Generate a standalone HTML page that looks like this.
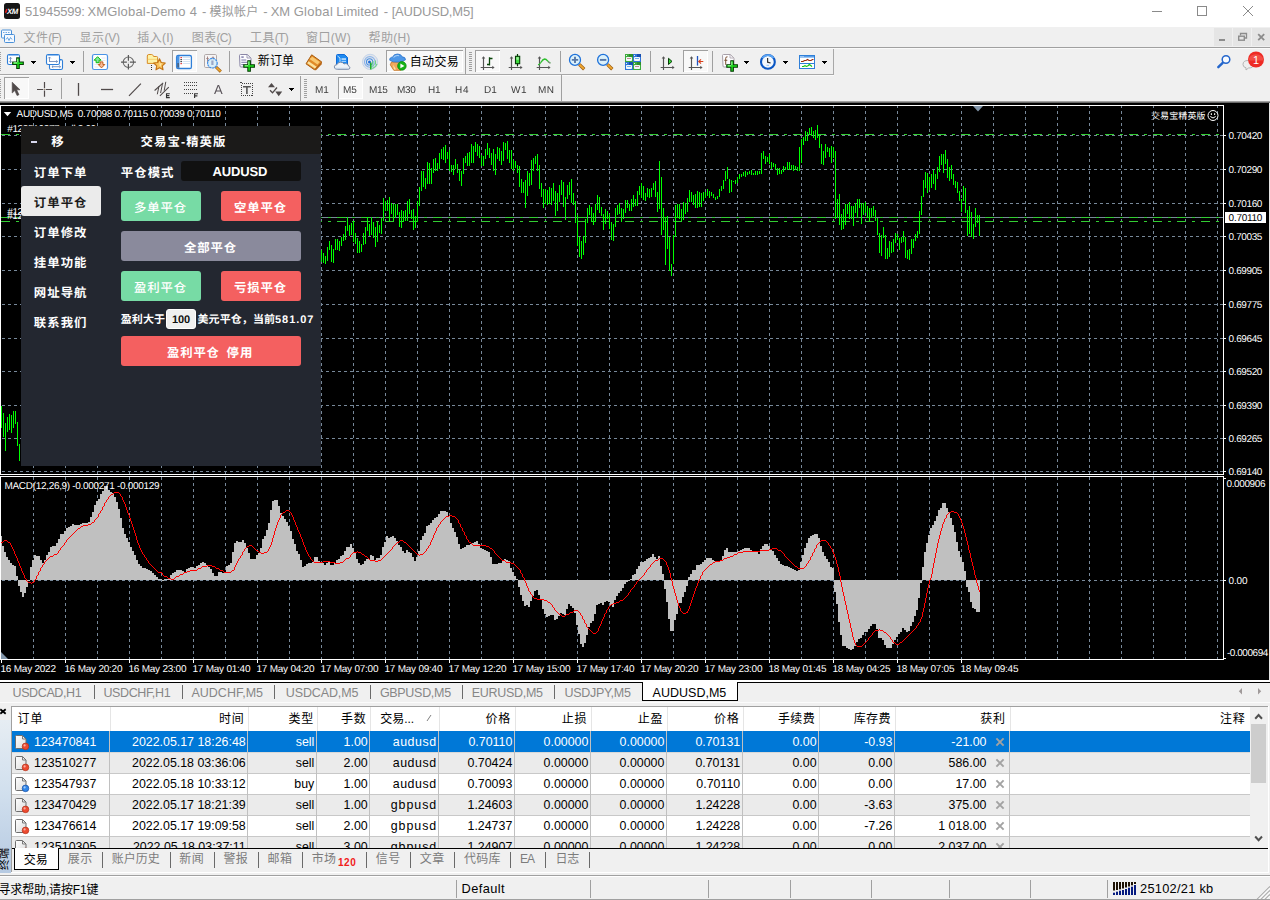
<!DOCTYPE html>
<html lang="zh-CN">
<head>
<meta charset="utf-8">
<title>51945599: XMGlobal-Demo 4 - 模拟帐户 - XM Global Limited - [AUDUSD,M5]</title>
<style>
html,body{margin:0;padding:0}
body{width:1270px;height:900px;overflow:hidden;position:relative;background:#f0f0f0;
font-family:"Liberation Sans","Noto Sans CJK SC",sans-serif;font-size:12px;color:#000;
-webkit-font-smoothing:antialiased}
.abs,.abs>*{position:absolute}
div,span{box-sizing:border-box;white-space:pre}

#title{left:0;top:0;width:1270px;height:27px;background:#fff}
#title .t{left:25px;top:3px;font-size:13.2px;line-height:17px;color:#999;letter-spacing:0.02px}
#menu{left:0;top:27px;width:1270px;height:20px;background:#f0f0f0}
#menu span{top:0;font-size:12px;line-height:20px;color:#a0a0a0}
#tbs{left:0;top:47px;width:1270px;height:55px;background:#f0f0f0}
.tbt{font-size:12px;line-height:14px;color:#000}
.tf{font-size:9.6px;line-height:12px;color:#333;text-align:center}


#chart{left:0;top:102px;width:1270px;height:578px;background:#000;overflow:hidden}
#chart span{color:#fff;line-height:12px;text-rendering:geometricPrecision}
#panel{left:21px;top:24px;width:300px;height:340px;background:#232730;overflow:hidden;font-family:"Liberation Sans","Noto Sans CJK SC",sans-serif}
#panel .hd{left:0;top:0;width:300px;height:28px;background:#1b1a19}
#panel span{color:#fff;font-weight:bold;line-height:20px}
#panel .btn{height:30px;border-radius:3px;text-align:center}
#panel .btn span{position:static;line-height:30px;font-size:13px}


#ctabs{left:0;top:680px;width:1270px;height:26px;background:#f0f0f0}
#ctabs span{line-height:16px}
#term{left:0;top:706px;width:1270px;height:171px;background:#f0f0f0;overflow:hidden}
#term span{line-height:16px}
#status{left:0;top:877px;width:1270px;height:23px;background:#f0f0f0}
#status span{line-height:16px}

</style>
</head>
<body>
<div id="title" class="abs"><svg width="1270" height="27" style="left:0;top:0"><rect x="4" y="3" width="16" height="16" rx="2.500" fill="#161616"/><path d="M5.600 12.800l1.300-3.900" stroke="#f0201a" stroke-width="1.500"/><text x="12.300" y="13.600" font-family="Liberation Sans, sans-serif" font-size="7.800" font-weight="bold" font-style="italic" fill="#fff" text-anchor="middle" letter-spacing="-.5" style="text-rendering:geometricPrecision">XM</text><path d="M1152 11.500h10" stroke="#8a8a8a" stroke-width="1"/><rect x="1197.500" y="6.500" width="9" height="9" fill="none" stroke="#8a8a8a" stroke-width="1"/><path d="M1243 6l10 10M1253 6l-10 10" stroke="#8a8a8a" stroke-width="1"/></svg><span style="left:25.00px;top:3px;font-size:13px;letter-spacing:-0.194px;line-height:17px;color:#999;">51945599:</span><span style="left:87.40px;top:3px;font-size:13px;letter-spacing:0.176px;line-height:17px;color:#999;">XMGlobal-Demo</span><span style="left:189.83px;top:3px;font-size:13px;letter-spacing:0.000px;line-height:17px;color:#999;">4</span><span style="left:201.88px;top:3px;font-size:13px;letter-spacing:0.000px;line-height:17px;color:#999;">-</span><span style="left:209.60px;top:3.5px;font-size:12px;letter-spacing:0.228px;line-height:17px;color:#999;">模拟帐户</span><span style="left:263.18px;top:3px;font-size:13px;letter-spacing:0.000px;line-height:17px;color:#999;">-</span><span style="left:270.70px;top:3px;font-size:13px;letter-spacing:-0.100px;line-height:17px;color:#999;">XM</span><span style="left:293.70px;top:3px;font-size:13px;letter-spacing:0.304px;line-height:17px;color:#999;">Global</span><span style="left:336.20px;top:3px;font-size:13px;letter-spacing:0.080px;line-height:17px;color:#999;">Limited</span><span style="left:383.68px;top:3px;font-size:13px;letter-spacing:0.000px;line-height:17px;color:#999;">-</span><span style="left:391.70px;top:3px;font-size:13px;letter-spacing:-0.190px;line-height:17px;color:#999;">[AUDUSD,M5]</span></div>
<div id="menu" class="abs"><svg width="1270" height="20" style="left:0;top:0"><rect x="1.500" y="3" width="10" height="8" rx="1" fill="#f4f9ff" stroke="#4a90d8"/><rect x="4.500" y="7.500" width="10" height="8" rx="1" fill="#f4f9ff" stroke="#4a90d8"/><path d="M6 12.500l1.500-2l1.500 3l1.500-3l1.500 2" stroke="#4a90d8" stroke-width=".8" fill="none"/><path d="M3 5.500h7" stroke="#4a90d8" stroke-width=".8" stroke-dasharray="1.500 1"/><rect x="1214" y="1" width="18" height="18" fill="#e5e5e5"/><rect x="1233" y="1" width="18" height="18" fill="#e5e5e5"/><rect x="1252" y="1" width="18" height="18" fill="#e5e5e5"/><rect x="1219" y="12" width="6" height="2" fill="#8c8c8c"/><path d="M1240.500 8.500v-2h6v4.500h-2" fill="none" stroke="#8c8c8c" stroke-width="1.300"/><rect x="1238.700" y="9.200" width="5.600" height="4" fill="#e5e5e5" stroke="#8c8c8c" stroke-width="1.400"/><path d="M1258.200 7.200l6 6M1264.200 7.200l-6 6" stroke="#8c8c8c" stroke-width="1.800"/></svg><span style="left:23.50px;top:3px;font-size:12px;letter-spacing:0.484px;line-height:16px;color:#a0a0a0;">文件</span><span style="left:48.30px;top:3px;font-size:12px;letter-spacing:-0.914px;line-height:16px;color:#a0a0a0;">(F)</span><span style="left:79.60px;top:3px;font-size:12px;letter-spacing:0.484px;line-height:16px;color:#a0a0a0;">显示</span><span style="left:104.40px;top:3px;font-size:12px;letter-spacing:-0.250px;line-height:16px;color:#a0a0a0;">(V)</span><span style="left:137.30px;top:3px;font-size:12px;letter-spacing:0.484px;line-height:16px;color:#a0a0a0;">插入</span><span style="left:162.10px;top:3px;font-size:12px;letter-spacing:0.086px;line-height:16px;color:#a0a0a0;">(I)</span><span style="left:191.80px;top:3px;font-size:12px;letter-spacing:0.484px;line-height:16px;color:#a0a0a0;">图表</span><span style="left:216.60px;top:3px;font-size:12px;letter-spacing:-0.786px;line-height:16px;color:#a0a0a0;">(C)</span><span style="left:250.00px;top:3px;font-size:12px;letter-spacing:0.484px;line-height:16px;color:#a0a0a0;">工具</span><span style="left:274.80px;top:3px;font-size:12px;letter-spacing:-0.714px;line-height:16px;color:#a0a0a0;">(T)</span><span style="left:306.00px;top:3px;font-size:12px;letter-spacing:0.484px;line-height:16px;color:#a0a0a0;">窗口</span><span style="left:330.80px;top:3px;font-size:12px;letter-spacing:0.286px;line-height:16px;color:#a0a0a0;">(W)</span><span style="left:368.50px;top:3px;font-size:12px;letter-spacing:0.484px;line-height:16px;color:#a0a0a0;">帮助</span><span style="left:393.30px;top:3px;font-size:12px;letter-spacing:0.114px;line-height:16px;color:#a0a0a0;">(H)</span></div>
<div id="tbs" class="abs"><svg width="1270" height="55" viewBox="0 47 1270 55" style="left:0;top:0"><rect x="0" y="47" width="1270" height="1" fill="#a0a0a0"/><rect x="0" y="48" width="1270" height="1" fill="#fafafa"/><rect x="0" y="74" width="834" height="1" fill="#a8a8a8"/><rect x="0" y="75" width="834" height="1" fill="#fafafa"/><rect x="833" y="49" width="1" height="26" fill="#a8a8a8"/><rect x="0" y="101" width="1270" height="1" fill="#a0a0a0"/><rect x="-2" y="52" width="3" height="1" fill="#a0a0a0" shape-rendering="crispEdges"/><rect x="-2" y="54" width="3" height="1" fill="#a0a0a0" shape-rendering="crispEdges"/><rect x="-2" y="56" width="3" height="1" fill="#a0a0a0" shape-rendering="crispEdges"/><rect x="-2" y="58" width="3" height="1" fill="#a0a0a0" shape-rendering="crispEdges"/><rect x="-2" y="60" width="3" height="1" fill="#a0a0a0" shape-rendering="crispEdges"/><rect x="-2" y="62" width="3" height="1" fill="#a0a0a0" shape-rendering="crispEdges"/><rect x="-2" y="64" width="3" height="1" fill="#a0a0a0" shape-rendering="crispEdges"/><rect x="-2" y="66" width="3" height="1" fill="#a0a0a0" shape-rendering="crispEdges"/><rect x="-2" y="68" width="3" height="1" fill="#a0a0a0" shape-rendering="crispEdges"/><rect x="-2" y="70" width="3" height="1" fill="#a0a0a0" shape-rendering="crispEdges"/><rect x="7.5" y="54.5" width="12" height="10" rx="1.6" fill="#fdfeff" stroke="#2f7fd8" stroke-width="1.1"/><path d="M8.3 55.5h10.4" stroke="#8fbdf0" stroke-width="1"/><path d="M10.500 57.300v5.400M9.200 58.700l1.300-1.400l1.300 1.400M9.200 61.300l1.300 1.400l1.300-1.400" stroke="#6f8cbc" stroke-width=".9" fill="none"/><path d="M16.75 57.900000000000006h2.5v4.05h4.05v2.5h-4.05v4.05h-2.5v-4.05h-4.05v-2.5h4.05z" fill="#1ee61e" stroke="#063c06" stroke-width="1.1" stroke-linejoin="miter"/><path d="M13.6 62.900000000000006h3.4499999999999997M17.7 58.800000000000004v3.4499999999999997" fill="none" stroke="#9af59a" stroke-width="1.1"/><path d="M31 61h5v1h-1v1h-1v1h-1v-1h-1v-1h-1z" fill="#000" shape-rendering="crispEdges"/><rect x="49.5" y="59.5" width="13" height="10" rx="1.6" fill="#fdfeff" stroke="#2f7fd8" stroke-width="1.1"/><path d="M50.3 60.5h11.4" stroke="#8fbdf0" stroke-width="1"/><path d="M52 66.700h8.500M53.200 65.500l-1.300 1.200l1.300 1.200M59.300 65.500l1.300 1.200l-1.300 1.200" stroke="#6f8cbc" stroke-width=".9" fill="none"/><rect x="46.5" y="54.5" width="13" height="10" rx="1.6" fill="#fdfeff" stroke="#2f7fd8" stroke-width="1.1"/><path d="M47.3 55.5h11.4" stroke="#8fbdf0" stroke-width="1"/><path d="M49.500 57v5M48.300 58.300l1.200-1.300l1.200 1.300M49.500 61.500h8M56.300 60.300l1.300 1.200l-1.300 1.200" stroke="#6f8cbc" stroke-width=".9" fill="none"/><path d="M70 61h5v1h-1v1h-1v1h-1v-1h-1v-1h-1z" fill="#000" shape-rendering="crispEdges"/><rect x="83" y="51" width="1" height="21" fill="#a0a0a0" shape-rendering="crispEdges"/><rect x="92.500" y="54.500" width="15" height="15" rx="1.800" fill="#fdfeff" stroke="#4a93e6" stroke-width="1.200"/><path d="M101.500 58h4M101.500 60.500h4M94.500 64.500h4M94.500 67h4" stroke="#dfe5ec" stroke-width=".8"/><path d="M97.600 56.700l3.500 3.500h-2v2.500h-3v-2.500h-2z" fill="#7fe89a" stroke="#10b810" stroke-width="1"/><path d="M101.500 67.900l-3.300-3.400h1.900v-2.600h2.800v2.600h1.900z" fill="#f7b896" stroke="#c0601c" stroke-width="1"/><circle cx="128.400" cy="62.200" r="5.200" fill="none" stroke="#6a6a6a" stroke-width="1.050"/><path d="M128.400 55v5.700M128.400 63.700v5.800M121 62.200h5.900M129.900 62.200h6" stroke="#5a5a5a" stroke-width="1.200"/><rect x="127.900" y="61.700" width="1" height="1" fill="#c8c8c8"/><path d="M147.300 56q0-1.500 1.500-1.500h2.800q1 0 1.500 1l.5 1h3q1 0 1 1v5.900h-10.300z" fill="#fdf3a8" stroke="#d88a24" stroke-width="1"/><path d="M147.800 59.300h9.300" stroke="#f5d070" stroke-width="1"/><path d="M151.500 65v5" stroke="#333" stroke-width="1" stroke-dasharray="1 1" shape-rendering="crispEdges"/><path d="M159.500 58.800l1.750 3.700l4 .5l-2.950 2.800l.75 4l-3.550-1.950l-3.550 1.950l.75-4l-2.950-2.800l4-.5z" fill="#f9c45c" stroke="#c47414" stroke-width="1.100" stroke-linejoin="round"/><path d="M159.500 61.500l.8 1.900l1.800.2l-1.300 1.300l.3 1.800l-1.600-.9" fill="#fde9a8"/><rect x="172" y="50" width="25" height="22" fill="#f8f8f8" shape-rendering="crispEdges"/><rect x="172" y="50" width="25" height="1" fill="#a0a0a0" shape-rendering="crispEdges"/><rect x="172" y="50" width="1" height="22" fill="#a0a0a0" shape-rendering="crispEdges"/><rect x="173" y="71" width="24" height="1" fill="#fff" shape-rendering="crispEdges"/><rect x="196" y="51" width="1" height="21" fill="#fff" shape-rendering="crispEdges"/><rect x="176.600" y="55.500" width="14.800" height="13" rx="1.600" fill="#fff" stroke="#2f7fd8" stroke-width="1.300"/><rect x="176.800" y="56" width="2.700" height="12" fill="#4c95e6"/><rect x="177.400" y="63" width="1.400" height="4.500" fill="#4a5a70"/><path d="M182.500 57.500h7.500M182.500 59.500h7.500M182.500 61.500h7.500M182.500 63.500h7.500" stroke="#cfe0f2" stroke-width=".9"/><rect x="180.500" y="57" width="1.300" height="1.200" fill="#e81c1c"/><rect x="180.500" y="59" width="1.300" height="1.200" fill="#222"/><rect x="180.500" y="61" width="1.300" height="1.200" fill="#222"/><rect x="180.500" y="63" width="1.300" height="1.200" fill="#e81c1c"/><rect x="204.500" y="54.500" width="12" height="13" rx="1.200" fill="#f6f4f4" stroke="#b0a8a8"/><path d="M207.500 56.500v6M206.300 58.500h2.400M213 56.500v5M211.800 57.800h2.400" stroke="#9a7a7a" stroke-width=".9"/><path d="M216 67l4.800 4.600" stroke="#9a5a10" stroke-width="3"/><path d="M216.300 67.300l4.300 4.100" stroke="#f0a830" stroke-width="1.600"/><circle cx="212.400" cy="63.200" r="4.800" fill="#d8eefa" fill-opacity=".9" stroke="#3f8ee6" stroke-width="1.200" stroke-dasharray="2.200 .6"/><path d="M211.300 60.500h2.200v4.500h-2.200z" fill="#9aa8c8"/><rect x="229" y="51" width="1" height="21" fill="#a0a0a0" shape-rendering="crispEdges"/><path d="M239.5 55.5q0-1 1-1h6.800000000000001l3.7 3.7v7.800000000000001q0 1-1 1h-9q-1 0-1-1z" fill="#fcfcfe" stroke="#8a86a6" stroke-width="1"/><path d="M247.0 54.8v3.2h3.2" fill="none" stroke="#8a86a6" stroke-width=".8"/><rect x="241.300" y="56.300" width="2.400" height="1.600" fill="#8a86b0"/><path d="M241.300 60h5M241.300 62.300h6M241.300 64.600h3" stroke="#7a78a8" stroke-width="1"/><path d="M247.85 60.7h2.5v4.05h4.05v2.5h-4.05v4.05h-2.5v-4.05h-4.05v-2.5h4.05z" fill="#1ee61e" stroke="#063c06" stroke-width="1.1" stroke-linejoin="miter"/><path d="M244.7 65.7h3.4499999999999997M248.79999999999998 61.6v3.4499999999999997" fill="none" stroke="#9af59a" stroke-width="1.1"/><path d="M311.700 54.800l10.100 7.200l-7.300 7.800l-8.500-6z" fill="#e08a28" stroke="#a85c10" stroke-width="1" stroke-linejoin="round"/><path d="M312.300 56.800l7.500 5.300l-2.300 2.500l-8-5.500z" fill="#f9c870"/><path d="M308.600 61.300l8 5.400l-1.600 1.700l-7.800-5.200z" fill="#fbe3a0"/><path d="M314.600 69.600l6.800-7.300l.6 1.600l-6.200 6.500z" fill="#b8681a"/><path d="M336.500 55.500q0-1 1-1h7l3 3v7h-11z" fill="#1e8af0" stroke="#0f6ad8" stroke-width="1"/><path d="M337.500 56l2.500 2v5.500" fill="none" stroke="#bfe0ff" stroke-width="1"/><rect x="341.500" y="58.300" width="4.500" height="1.500" fill="#cfe8ff"/><rect x="341.500" y="60.800" width="4.500" height="1.200" fill="#9fd0ff"/><path d="M337.300 69.300q-3 0-3-2.400q0-2.200 2.700-2.300q.8-2.400 3.600-2.400q2.400 0 3.400 1.800q1.200-.7 2.600-.2q1.900.6 2 2.400q1.300.4 1.300 1.600q0 1.500-2 1.500z" fill="#eef3f9" stroke="#7c8ca8" stroke-width="1"/><path d="M335.500 68.300h12.500" stroke="#c0cfe2" stroke-width="1"/><circle cx="370.100" cy="61.900" r="7.600" fill="#e4e6ea" stroke="#c4d4ea" stroke-width="1"/><circle cx="369.800" cy="61.900" r="5.300" fill="none" stroke="#8ab4ea" stroke-width="1.100"/><circle cx="369.600" cy="61.900" r="3.100" fill="none" stroke="#4a90e2" stroke-width="1.100"/><circle cx="369.500" cy="61.900" r="1.500" fill="#1f6ad8"/><path d="M370.800 69.600v-7" stroke="#19b019" stroke-width="1.500"/><path d="M373 66.500v-5.500M375.500 64.500v-4M371.500 68.500q3.500-.5 5.500-4.500" stroke="#6fd08a" stroke-width="1.100" fill="none"/><rect x="386" y="50" width="77" height="22" fill="#f8f8f8" shape-rendering="crispEdges"/><rect x="386" y="50" width="77" height="1" fill="#a0a0a0" shape-rendering="crispEdges"/><rect x="386" y="50" width="1" height="22" fill="#a0a0a0" shape-rendering="crispEdges"/><rect x="387" y="71" width="76" height="1" fill="#fff" shape-rendering="crispEdges"/><rect x="462" y="51" width="1" height="21" fill="#fff" shape-rendering="crispEdges"/><path d="M391.500 62h11.500l1.300 2.500l-3.500 5.800h-7l-3.500-5.500z" fill="#f3a85c" stroke="#c77a2c" stroke-width=".9"/><path d="M393 64.500l3 5h-2z" fill="#fde4a8"/><path d="M389.800 60.300q-.6-2.800 3-3.300q.8-3 4.700-3q3.700 0 4.600 2.800q3.500.2 3.400 3q-3 2.500-8 2.300q-5 .2-7.700-1.800z" fill="#4d97e8" stroke="#2c74cc" stroke-width=".8"/><path d="M393.500 57.500q2-2.500 5.500-1.800" fill="none" stroke="#a8d0f8" stroke-width="1.100"/><circle cx="401.900" cy="65.900" r="4.300" fill="#17b417" stroke="#0c8a0c" stroke-width=".7"/><path d="M400.400 63.500l4 2.400l-4 2.400z" fill="#fff"/><rect x="465" y="48" width="1" height="26" fill="#a0a0a0" shape-rendering="crispEdges"/><rect x="469" y="52" width="3" height="1" fill="#a0a0a0" shape-rendering="crispEdges"/><rect x="469" y="54" width="3" height="1" fill="#a0a0a0" shape-rendering="crispEdges"/><rect x="469" y="56" width="3" height="1" fill="#a0a0a0" shape-rendering="crispEdges"/><rect x="469" y="58" width="3" height="1" fill="#a0a0a0" shape-rendering="crispEdges"/><rect x="469" y="60" width="3" height="1" fill="#a0a0a0" shape-rendering="crispEdges"/><rect x="469" y="62" width="3" height="1" fill="#a0a0a0" shape-rendering="crispEdges"/><rect x="469" y="64" width="3" height="1" fill="#a0a0a0" shape-rendering="crispEdges"/><rect x="469" y="66" width="3" height="1" fill="#a0a0a0" shape-rendering="crispEdges"/><rect x="469" y="68" width="3" height="1" fill="#a0a0a0" shape-rendering="crispEdges"/><rect x="469" y="70" width="3" height="1" fill="#a0a0a0" shape-rendering="crispEdges"/><rect x="475" y="50" width="25" height="22" fill="#f8f8f8" shape-rendering="crispEdges"/><rect x="475" y="50" width="25" height="1" fill="#a0a0a0" shape-rendering="crispEdges"/><rect x="475" y="50" width="1" height="22" fill="#a0a0a0" shape-rendering="crispEdges"/><rect x="476" y="71" width="24" height="1" fill="#fff" shape-rendering="crispEdges"/><rect x="499" y="51" width="1" height="21" fill="#fff" shape-rendering="crispEdges"/><path d="M483.5 57.099999999999994V70M480.7 67.5H493.8" stroke="#555" stroke-width="1.15" fill="none"/><path d="M481.7 58.599999999999994L483.5 56.3L485.3 58.599999999999994zM492.3 65.7L494.6 67.5L492.3 69.3z" fill="#555"/><path d="M489.500 57.300v8.300M487 64.500h2.500M489.500 58.500h3" stroke="#0a460a" stroke-width="1.300" fill="none"/><path d="M511.5 57.099999999999994V70M508.7 67.5H521.8000000000001" stroke="#555" stroke-width="1.15" fill="none"/><path d="M509.7 58.599999999999994L511.5 56.3L513.3 58.599999999999994zM520.3000000000001 65.7L522.6 67.5L520.3000000000001 69.3z" fill="#555"/><path d="M517.500 54v12.300" stroke="#063c06" stroke-width="1.200"/><rect x="515.500" y="56.300" width="4.200" height="7.400" fill="#3fdc3f" stroke="#063c06" stroke-width="1.100"/><rect x="516.400" y="57.200" width="2.400" height="2.600" fill="#9af09a"/><path d="M539.5 57.099999999999994V70M536.7 67.5H549.8000000000001" stroke="#555" stroke-width="1.15" fill="none"/><path d="M537.7 58.599999999999994L539.5 56.3L541.3 58.599999999999994zM548.3000000000001 65.7L550.6 67.5L548.3000000000001 69.3z" fill="#555"/><path d="M538 64.800q1.500-.3 2.800-2.300q2-3.300 3.800-3.500q1.500 0 3 1.800q1.500 1.800 2.800 2.200" stroke="#2fc02f" stroke-width="1.300" fill="none"/><path d="M548 61.800l2.400 1.400" stroke="#8a8a8a" stroke-width="1.200"/><rect x="560" y="51" width="1" height="21" fill="#a0a0a0" shape-rendering="crispEdges"/><path d="M579.3 64.4l4.9 4.8" stroke="#9a5a10" stroke-width="3.3" stroke-linecap="butt"/><path d="M579.6 64.7l4.300 4.200" stroke="#f0a830" stroke-width="1.900" stroke-linecap="butt"/><circle cx="575" cy="59.9" r="5.5" fill="#dcf1fa" stroke="#1f72da" stroke-width="1.3"/><path d="M571.8 59.9h6.4M575 56.699999999999996v6.4" stroke="#5878a8" stroke-width="1.900"/><path d="M607.4 64.4l4.9 4.8" stroke="#9a5a10" stroke-width="3.3" stroke-linecap="butt"/><path d="M607.7 64.7l4.300 4.200" stroke="#f0a830" stroke-width="1.900" stroke-linecap="butt"/><circle cx="603.1" cy="59.9" r="5.5" fill="#dcf1fa" stroke="#1f72da" stroke-width="1.3"/><path d="M599.9 59.9h6.4" stroke="#5878a8" stroke-width="1.900"/><rect x="625" y="54" width="8" height="8" fill="#3daa3d" shape-rendering="crispEdges"/><rect x="629" y="54" width="4" height="3" fill="#2a8f2a" shape-rendering="crispEdges"/><rect x="626" y="55" width="1" height="1" fill="#e8f8e8"/><rect x="626" y="57" width="6" height="4" rx=".8" fill="#f4f8fb"/><rect x="627" y="58" width="4" height="1" fill="#c09090"/><rect x="633" y="54" width="8" height="8" fill="#2f74d6" shape-rendering="crispEdges"/><rect x="637" y="54" width="4" height="3" fill="#174fb0" shape-rendering="crispEdges"/><rect x="634" y="55" width="1" height="1" fill="#e8f8e8"/><rect x="634" y="57" width="6" height="4" rx=".8" fill="#f4f8fb"/><rect x="635" y="58" width="4" height="1" fill="#6fb0f0"/><rect x="625" y="62" width="8" height="8" fill="#2f74d6" shape-rendering="crispEdges"/><rect x="629" y="62" width="4" height="3" fill="#174fb0" shape-rendering="crispEdges"/><rect x="626" y="63" width="1" height="1" fill="#e8f8e8"/><rect x="626" y="65" width="6" height="4" rx=".8" fill="#f4f8fb"/><rect x="627" y="66" width="4" height="1" fill="#6fb0f0"/><rect x="633" y="62" width="8" height="8" fill="#3daa3d" shape-rendering="crispEdges"/><rect x="637" y="62" width="4" height="3" fill="#2a8f2a" shape-rendering="crispEdges"/><rect x="634" y="63" width="1" height="1" fill="#e8f8e8"/><rect x="634" y="65" width="6" height="4" rx=".8" fill="#f4f8fb"/><rect x="635" y="66" width="4" height="1" fill="#c09090"/><rect x="650" y="51" width="1" height="21" fill="#a0a0a0" shape-rendering="crispEdges"/><path d="M663.5 57.099999999999994V70M660.7 67.5H673.8000000000001" stroke="#555" stroke-width="1.15" fill="none"/><path d="M661.7 58.599999999999994L663.5 56.3L665.3 58.599999999999994zM672.3000000000001 65.7L674.6 67.5L672.3000000000001 69.3z" fill="#555"/><path d="M668.500 58.300l3.500 3.100l-3.500 3.100z" fill="#35d835" stroke="#063c06" stroke-width="1"/><rect x="683" y="50" width="25" height="22" fill="#f8f8f8" shape-rendering="crispEdges"/><rect x="683" y="50" width="25" height="1" fill="#a0a0a0" shape-rendering="crispEdges"/><rect x="683" y="50" width="1" height="22" fill="#a0a0a0" shape-rendering="crispEdges"/><rect x="684" y="71" width="24" height="1" fill="#fff" shape-rendering="crispEdges"/><rect x="707" y="51" width="1" height="21" fill="#fff" shape-rendering="crispEdges"/><path d="M691.5 57.099999999999994V70M688.7 67.5H701.8000000000001" stroke="#555" stroke-width="1.15" fill="none"/><path d="M689.7 58.599999999999994L691.5 56.3L693.3 58.599999999999994zM700.3000000000001 65.7L702.6 67.5L700.3000000000001 69.3z" fill="#555"/><path d="M697.500 56v9.600" stroke="#1f55c0" stroke-width="1.300"/><path d="M703.300 61.500h-4.500M701 59.300l-2.300 2.200l2.300 2.200" stroke="#d8401c" stroke-width="1.100" fill="none"/><rect x="712" y="51" width="1" height="21" fill="#a0a0a0" shape-rendering="crispEdges"/><path d="M722.5 55.5q0-1 1-1h6.800000000000001l3.7 3.7v7.800000000000001q0 1-1 1h-9q-1 0-1-1z" fill="#fcfcfe" stroke="#a8a0a8" stroke-width="1"/><path d="M730.0 54.8v3.2h3.2" fill="none" stroke="#a8a0a8" stroke-width=".8"/><path d="M727.500 56.800q-1.800-.2-1.800 1.500v6.500M724.300 60.300h3" stroke="#7a5030" stroke-width="1" fill="none"/><path d="M730.85 60.7h2.5v4.05h4.05v2.5h-4.05v4.05h-2.5v-4.05h-4.05v-2.5h4.05z" fill="#1ee61e" stroke="#063c06" stroke-width="1.1" stroke-linejoin="miter"/><path d="M727.7 65.7h3.4499999999999997M731.8000000000001 61.6v3.4499999999999997" fill="none" stroke="#9af59a" stroke-width="1.1"/><path d="M744 61h5v1h-1v1h-1v1h-1v-1h-1v-1h-1z" fill="#000" shape-rendering="crispEdges"/><circle cx="767.900" cy="61.900" r="6.900" fill="#f4f8fc" stroke="#0a56c4" stroke-width="2.100"/><path d="M762.300 58a6.900 6.900 0 0 1 11.200 0" fill="none" stroke="#5aa4f4" stroke-width="1.600"/><path d="M767.600 58v4.200l3 .8" stroke="#333" stroke-width="1.200" fill="none"/><path d="M766.500 65.300h2.500" stroke="#8ac0f8" stroke-width="1"/><path d="M783 61h5v1h-1v1h-1v1h-1v-1h-1v-1h-1z" fill="#000" shape-rendering="crispEdges"/><rect x="799" y="55" width="16" height="14" fill="#2f7fd8" shape-rendering="crispEdges"/><rect x="800" y="56" width="14" height="2" fill="#9cc6f4" shape-rendering="crispEdges"/><rect x="804" y="56" width="10" height="1" fill="#5a9ee8" shape-rendering="crispEdges"/><rect x="800" y="58" width="14" height="5" fill="#fff" shape-rendering="crispEdges"/><rect x="800" y="64" width="14" height="4" fill="#fff" shape-rendering="crispEdges"/><path d="M801 61.500h2l1.500-1h1.500l1.500-1l1.500 1h2l1.500-1h1" stroke="#9a2a0a" stroke-width="1.100" fill="none"/><path d="M802 66.500h1.500l1.500-.800l1.500.800l1.500-.800l1.300-1.200l1.500 1l1.200 1.200" stroke="#12c412" stroke-width="1.100" fill="none"/><path d="M822 61h5v1h-1v1h-1v1h-1v-1h-1v-1h-1z" fill="#000" shape-rendering="crispEdges"/><path d="M1218.300 67.200l4.400-4.400" stroke="#2466cc" stroke-width="2.400" stroke-linecap="round"/><circle cx="1226" cy="59.500" r="3.800" fill="#f8fbff" stroke="#2466cc" stroke-width="1.500"/><path d="M1243 64.500q0-4 5-4q5.500 0 5.500 4q0 3.500-5 3.500l-2.500 2v-2.200q-3-.6-3-3.300z" fill="#eeeeee" stroke="#b4b4b4" stroke-width="1"/><circle cx="1256" cy="59.500" r="8" fill="#ee2a24"/><path d="M1248.200 60.500a8 8 0 0 1 15.600 0z" fill="#f4564e" opacity=".8"/><rect x="-2" y="79" width="3" height="1" fill="#a0a0a0" shape-rendering="crispEdges"/><rect x="-2" y="81" width="3" height="1" fill="#a0a0a0" shape-rendering="crispEdges"/><rect x="-2" y="83" width="3" height="1" fill="#a0a0a0" shape-rendering="crispEdges"/><rect x="-2" y="85" width="3" height="1" fill="#a0a0a0" shape-rendering="crispEdges"/><rect x="-2" y="87" width="3" height="1" fill="#a0a0a0" shape-rendering="crispEdges"/><rect x="-2" y="89" width="3" height="1" fill="#a0a0a0" shape-rendering="crispEdges"/><rect x="-2" y="91" width="3" height="1" fill="#a0a0a0" shape-rendering="crispEdges"/><rect x="-2" y="93" width="3" height="1" fill="#a0a0a0" shape-rendering="crispEdges"/><rect x="-2" y="95" width="3" height="1" fill="#a0a0a0" shape-rendering="crispEdges"/><rect x="-2" y="97" width="3" height="1" fill="#a0a0a0" shape-rendering="crispEdges"/><rect x="4" y="77" width="25" height="22" fill="#f8f8f8" shape-rendering="crispEdges"/><rect x="4" y="77" width="25" height="1" fill="#a0a0a0" shape-rendering="crispEdges"/><rect x="4" y="77" width="1" height="22" fill="#a0a0a0" shape-rendering="crispEdges"/><rect x="5" y="98" width="24" height="1" fill="#fff" shape-rendering="crispEdges"/><rect x="28" y="78" width="1" height="21" fill="#fff" shape-rendering="crispEdges"/><path d="M12.200 82.200v10.800l2.600-2.400l2.300 5l1.900-.9l-2.300-4.900h3.300z" fill="#504a4a" stroke="#504a4a" stroke-width=".6" stroke-linejoin="round"/><path d="M44.500 82v6.300M44.500 90.500v6.300M37 89.500h6.300M45.700 89.500h6.300" stroke="#504a4a" stroke-width="1.200"/><rect x="44" y="89" width="1" height="1" fill="#a08870"/><rect x="61" y="78" width="1" height="21" fill="#a0a0a0" shape-rendering="crispEdges"/><path d="M78.500 83v12.800" stroke="#504a4a" stroke-width="1.300"/><path d="M101 89.500h12.100" stroke="#504a4a" stroke-width="1.300"/><path d="M129 95.800l11.900-12.200" stroke="#504a4a" stroke-width="1.200"/><path d="M154.600 90.500l8.600-7.600M159.900 95.800l8.900-8.600" stroke="#504a4a" stroke-width="1.100" fill="none"/><path d="M157.300 94.300l1.700-8.300M160.600 93l1.800-9M164.200 90.600l1.600-8.800" stroke="#504a4a" stroke-width="1" fill="none"/><path d="M169.800 93.700h-3.300v3.900h3.300M166.500 95.650h2.800" stroke="#333" stroke-width="1.100" fill="none"/><path d="M184 82.5h14" stroke="#444" stroke-width="1" stroke-dasharray="1 1" shape-rendering="crispEdges"/><path d="M184 85.5h14" stroke="#444" stroke-width="1" stroke-dasharray="1 1" shape-rendering="crispEdges"/><path d="M184 89.5h14" stroke="#444" stroke-width="1" stroke-dasharray="1 1" shape-rendering="crispEdges"/><path d="M184 93.500h10" stroke="#444" stroke-width="1" stroke-dasharray="1 1" shape-rendering="crispEdges"/><path d="M194.600 98.100v-4.400h3.400M194.600 95.900h2.800" stroke="#333" stroke-width="1.150" fill="none"/><rect x="241.500" y="83.500" width="11" height="12" fill="none" stroke="#444" stroke-width="1" stroke-dasharray="1 1" shape-rendering="crispEdges"/><rect x="240" y="82" width="2" height="1" fill="#444"/><path d="M243 86.700h7.800M246.900 86.700v7.300" stroke="#555" stroke-width="1.600" fill="none"/><path d="M268 87.200l3.500-4.300l3.500 4.300zM275.300 91.600l3.450 4.600l3.450-4.600z" fill="#504a4a"/><path d="M270 90.300l2.500 2.500l4.500-5.300" stroke="#504a4a" stroke-width="1.300" fill="none"/><path d="M289 88h5v1h-1v1h-1v1h-1v-1h-1v-1h-1z" fill="#000" shape-rendering="crispEdges"/><rect x="300" y="76" width="1" height="25" fill="#a0a0a0" shape-rendering="crispEdges"/><rect x="304" y="79" width="3" height="1" fill="#a0a0a0" shape-rendering="crispEdges"/><rect x="304" y="81" width="3" height="1" fill="#a0a0a0" shape-rendering="crispEdges"/><rect x="304" y="83" width="3" height="1" fill="#a0a0a0" shape-rendering="crispEdges"/><rect x="304" y="85" width="3" height="1" fill="#a0a0a0" shape-rendering="crispEdges"/><rect x="304" y="87" width="3" height="1" fill="#a0a0a0" shape-rendering="crispEdges"/><rect x="304" y="89" width="3" height="1" fill="#a0a0a0" shape-rendering="crispEdges"/><rect x="304" y="91" width="3" height="1" fill="#a0a0a0" shape-rendering="crispEdges"/><rect x="304" y="93" width="3" height="1" fill="#a0a0a0" shape-rendering="crispEdges"/><rect x="304" y="95" width="3" height="1" fill="#a0a0a0" shape-rendering="crispEdges"/><rect x="304" y="97" width="3" height="1" fill="#a0a0a0" shape-rendering="crispEdges"/><rect x="338" y="77" width="25" height="22" fill="#f8f8f8" shape-rendering="crispEdges"/><rect x="338" y="77" width="25" height="1" fill="#a0a0a0" shape-rendering="crispEdges"/><rect x="338" y="77" width="1" height="22" fill="#a0a0a0" shape-rendering="crispEdges"/><rect x="339" y="98" width="24" height="1" fill="#fff" shape-rendering="crispEdges"/><rect x="362" y="78" width="1" height="21" fill="#fff" shape-rendering="crispEdges"/><rect x="561" y="75" width="1" height="26" fill="#a0a0a0" shape-rendering="crispEdges"/></svg><span style="left:257.80px;top:7px;font-size:12px;letter-spacing:0.142px;line-height:14px;color:#000;">新订单</span><span style="left:409.80px;top:7.5px;font-size:12px;letter-spacing:0.328px;line-height:14px;color:#000;">自动交易</span><span style="left:214.30px;top:36.5px;font-size:13px;letter-spacing:0.000px;line-height:12px;color:#5a545a;text-rendering:geometricPrecision;will-change:transform;">A</span><span style="left:1252.500px;top:6.500px;font-size:11px;line-height:12px;color:#fff;width:7px;text-align:center">1</span><span style="left:315.10px;top:38px;font-size:10px;letter-spacing:-0.106px;line-height:12px;color:#3c3c3c;text-rendering:geometricPrecision;will-change:transform;">M1</span><span style="left:343.10px;top:38px;font-size:10px;letter-spacing:-0.106px;line-height:12px;color:#3c3c3c;text-rendering:geometricPrecision;will-change:transform;">M5</span><span style="left:369.00px;top:38px;font-size:10px;letter-spacing:-0.277px;line-height:12px;color:#3c3c3c;text-rendering:geometricPrecision;will-change:transform;">M15</span><span style="left:397.10px;top:38px;font-size:10px;letter-spacing:-0.327px;line-height:12px;color:#3c3c3c;text-rendering:geometricPrecision;will-change:transform;">M30</span><span style="left:428.10px;top:38px;font-size:10px;letter-spacing:-0.197px;line-height:12px;color:#3c3c3c;text-rendering:geometricPrecision;will-change:transform;">H1</span><span style="left:455.10px;top:38px;font-size:10px;letter-spacing:0.803px;line-height:12px;color:#3c3c3c;text-rendering:geometricPrecision;will-change:transform;">H4</span><span style="left:483.90px;top:38px;font-size:10px;letter-spacing:0.003px;line-height:12px;color:#3c3c3c;text-rendering:geometricPrecision;will-change:transform;">D1</span><span style="left:511.20px;top:38px;font-size:10px;letter-spacing:0.600px;line-height:12px;color:#3c3c3c;text-rendering:geometricPrecision;will-change:transform;">W1</span><span style="left:538.00px;top:38px;font-size:10px;letter-spacing:0.337px;line-height:12px;color:#3c3c3c;text-rendering:geometricPrecision;will-change:transform;">MN</span></div>
<div id="chart" class="abs"><svg width="1270" height="578" viewBox="0 102 1270 578" style="left:0;top:0" shape-rendering="crispEdges"><rect x="0" y="102" width="1270" height="1" fill="#696969"/><rect x="1269" y="103" width="1" height="577" fill="#e3e3e3"/><g stroke="#778899" stroke-width="1" stroke-dasharray="3 3" fill="none"><path d="M33.5 105V474M33.5 477V659M65.5 105V474M65.5 477V659M97.5 105V474M97.5 477V659M129.5 105V474M129.5 477V659M161.5 105V474M161.5 477V659M193.5 105V474M193.5 477V659M225.5 105V474M225.5 477V659M257.5 105V474M257.5 477V659M289.5 105V474M289.5 477V659M321.5 105V474M321.5 477V659M353.5 105V474M353.5 477V659M385.5 105V474M385.5 477V659M417.5 105V474M417.5 477V659M449.5 105V474M449.5 477V659M481.5 105V474M481.5 477V659M513.5 105V474M513.5 477V659M545.5 105V474M545.5 477V659M577.5 105V474M577.5 477V659M609.5 105V474M609.5 477V659M641.5 105V474M641.5 477V659M673.5 105V474M673.5 477V659M705.5 105V474M705.5 477V659M737.5 105V474M737.5 477V659M769.5 105V474M769.5 477V659M801.5 105V474M801.5 477V659M833.5 105V474M833.5 477V659M865.5 105V474M865.5 477V659M897.5 105V474M897.5 477V659M929.5 105V474M929.5 477V659M961.5 105V474M961.5 477V659M993.5 105V474M993.5 477V659M1025.5 105V474M1025.5 477V659M1057.5 105V474M1057.5 477V659M1089.5 105V474M1089.5 477V659M1121.5 105V474M1121.5 477V659M1153.5 105V474M1153.5 477V659M1185.5 105V474M1185.5 477V659M1217.5 105V474M1217.5 477V659M2 135.5H1223M2 169.5H1223M2 203.5H1223M2 236.5H1223M2 270.5H1223M2 304.5H1223M2 338.5H1223M2 371.5H1223M2 405.5H1223M2 438.5H1223M2 471.5H1223M2 580.5H1223"/></g><path d="M1 536h1V580h-1zM2 546h2V580h-2zM4 552h2V580h-2zM6 557h2V580h-2zM8 560h2V580h-2zM10 563h2V580h-2zM12 565h2V580h-2zM14 566h2V580h-2zM16 576h2V580h-2zM18 580h2V586h-2zM20 580h2V592h-2zM22 580h2V597h-2zM24 580h2V593h-2zM26 580h2V587h-2zM28 580h2V581h-2zM30 567h2V580h-2zM32 560h2V580h-2zM34 555h2V580h-2zM36 556h2V580h-2zM38 556h2V580h-2zM40 560h2V580h-2zM42 563h2V580h-2zM44 560h2V580h-2zM46 555h2V580h-2zM48 552h2V580h-2zM50 547h2V580h-2zM52 546h2V580h-2zM54 546h2V580h-2zM56 543h2V580h-2zM58 539h2V580h-2zM60 534h2V580h-2zM62 534h2V580h-2zM64 531h2V580h-2zM66 528h2V580h-2zM68 527h2V580h-2zM70 526h2V580h-2zM72 524h2V580h-2zM74 525h2V580h-2zM76 525h2V580h-2zM78 525h2V580h-2zM80 524h2V580h-2zM82 523h2V580h-2zM84 523h2V580h-2zM86 523h2V580h-2zM88 522h2V580h-2zM90 517h2V580h-2zM92 512h2V580h-2zM94 505h2V580h-2zM96 501h2V580h-2zM98 499h2V580h-2zM100 494h2V580h-2zM102 491h2V580h-2zM104 486h2V580h-2zM106 486h2V580h-2zM108 490h2V580h-2zM110 492h2V580h-2zM112 493h2V580h-2zM114 497h2V580h-2zM116 502h2V580h-2zM118 509h2V580h-2zM120 518h2V580h-2zM122 528h2V580h-2zM124 534h2V580h-2zM126 538h2V580h-2zM128 542h2V580h-2zM130 547h2V580h-2zM132 551h2V580h-2zM134 555h2V580h-2zM136 560h2V580h-2zM138 564h2V580h-2zM140 566h2V580h-2zM142 568h2V580h-2zM144 568h2V580h-2zM146 569h2V580h-2zM148 570h2V580h-2zM150 571h2V580h-2zM152 573h2V580h-2zM154 575h2V580h-2zM156 577h2V580h-2zM158 579h2V580h-2zM160 579h2V580h-2zM162 580h2V581h-2zM164 579h2V580h-2zM166 579h2V580h-2zM168 578h2V580h-2zM170 575h2V580h-2zM172 573h2V580h-2zM174 572h2V580h-2zM176 570h2V580h-2zM178 570h2V580h-2zM180 570h2V580h-2zM182 571h2V580h-2zM184 572h2V580h-2zM186 569h2V580h-2zM188 568h2V580h-2zM190 567h2V580h-2zM192 567h2V580h-2zM194 568h2V580h-2zM196 566h2V580h-2zM198 565h2V580h-2zM200 563h2V580h-2zM202 562h2V580h-2zM204 563h2V580h-2zM206 565h2V580h-2zM208 567h2V580h-2zM210 569h2V580h-2zM212 573h2V580h-2zM214 576h2V580h-2zM216 576h2V580h-2zM218 572h2V580h-2zM220 572h2V580h-2zM222 573h2V580h-2zM224 572h2V580h-2zM226 566h2V580h-2zM228 565h2V580h-2zM230 563h2V580h-2zM232 552h2V580h-2zM234 543h2V580h-2zM236 541h2V580h-2zM238 542h2V580h-2zM240 542h2V580h-2zM242 540h2V580h-2zM244 543h2V580h-2zM246 548h2V580h-2zM248 553h2V580h-2zM250 559h2V580h-2zM252 559h2V580h-2zM254 559h2V580h-2zM256 555h2V580h-2zM258 553h2V580h-2zM260 548h2V580h-2zM262 539h2V580h-2zM264 536h2V580h-2zM266 530h2V580h-2zM268 523h2V580h-2zM270 510h2V580h-2zM272 501h2V580h-2zM274 500h2V580h-2zM276 500h2V580h-2zM278 506h2V580h-2zM280 513h2V580h-2zM282 516h2V580h-2zM284 519h2V580h-2zM286 522h2V580h-2zM288 526h2V580h-2zM290 531h2V580h-2zM292 539h2V580h-2zM294 544h2V580h-2zM296 551h2V580h-2zM298 554h2V580h-2zM300 560h2V580h-2zM302 567h2V580h-2zM304 566h2V580h-2zM306 564h2V580h-2zM308 563h2V580h-2zM310 563h2V580h-2zM312 562h2V580h-2zM314 557h2V580h-2zM316 557h2V580h-2zM318 561h2V580h-2zM320 563h2V580h-2zM322 563h2V580h-2zM324 565h2V580h-2zM326 563h2V580h-2zM328 562h2V580h-2zM330 565h2V580h-2zM332 565h2V580h-2zM334 563h2V580h-2zM336 560h2V580h-2zM338 559h2V580h-2zM340 556h2V580h-2zM342 555h2V580h-2zM344 551h2V580h-2zM346 547h2V580h-2zM348 547h2V580h-2zM350 544h2V580h-2zM352 548h2V580h-2zM354 552h2V580h-2zM356 559h2V580h-2zM358 563h2V580h-2zM360 565h2V580h-2zM362 564h2V580h-2zM364 561h2V580h-2zM366 559h2V580h-2zM368 559h2V580h-2zM370 555h2V580h-2zM372 556h2V580h-2zM374 560h2V580h-2zM376 558h2V580h-2zM378 558h2V580h-2zM380 555h2V580h-2zM382 547h2V580h-2zM384 542h2V580h-2zM386 536h2V580h-2zM388 538h2V580h-2zM390 537h2V580h-2zM392 536h2V580h-2zM394 538h2V580h-2zM396 541h2V580h-2zM398 545h2V580h-2zM400 547h2V580h-2zM402 551h2V580h-2zM404 553h2V580h-2zM406 550h2V580h-2zM408 552h2V580h-2zM410 553h2V580h-2zM412 557h2V580h-2zM414 561h2V580h-2zM416 557h2V580h-2zM418 551h2V580h-2zM420 540h2V580h-2zM422 536h2V580h-2zM424 533h2V580h-2zM426 526h2V580h-2zM428 525h2V580h-2zM430 523h2V580h-2zM432 520h2V580h-2zM434 518h2V580h-2zM436 517h2V580h-2zM438 514h2V580h-2zM440 511h2V580h-2zM442 511h2V580h-2zM444 511h2V580h-2zM446 512h2V580h-2zM448 516h2V580h-2zM450 523h2V580h-2zM452 528h2V580h-2zM454 532h2V580h-2zM456 537h2V580h-2zM458 544h2V580h-2zM460 549h2V580h-2zM462 548h2V580h-2zM464 547h2V580h-2zM466 545h2V580h-2zM468 545h2V580h-2zM470 544h2V580h-2zM472 543h2V580h-2zM474 542h2V580h-2zM476 541h2V580h-2zM478 544h2V580h-2zM480 548h2V580h-2zM482 549h2V580h-2zM484 550h2V580h-2zM486 551h2V580h-2zM488 552h2V580h-2zM490 557h2V580h-2zM492 564h2V580h-2zM494 564h2V580h-2zM496 564h2V580h-2zM498 563h2V580h-2zM500 563h2V580h-2zM502 561h2V580h-2zM504 559h2V580h-2zM506 560h2V580h-2zM508 561h2V580h-2zM510 568h2V580h-2zM512 572h2V580h-2zM514 576h2V580h-2zM516 579h2V580h-2zM518 580h2V587h-2zM520 580h2V595h-2zM522 580h2V601h-2zM524 580h2V606h-2zM526 580h2V605h-2zM528 580h2V607h-2zM530 580h2V601h-2zM532 580h2V596h-2zM534 580h2V591h-2zM536 580h2V590h-2zM538 580h2V595h-2zM540 580h2V600h-2zM542 580h2V609h-2zM544 580h2V614h-2zM546 580h2V617h-2zM548 580h2V616h-2zM550 580h2V615h-2zM552 580h2V615h-2zM554 580h2V620h-2zM556 580h2V619h-2zM558 580h2V616h-2zM560 580h2V613h-2zM562 580h2V614h-2zM564 580h2V615h-2zM566 580h2V609h-2zM568 580h2V604h-2zM570 580h2V606h-2zM572 580h2V608h-2zM574 580h2V613h-2zM576 580h2V625h-2zM578 580h2V634h-2zM580 580h2V644h-2zM582 580h2V647h-2zM584 580h2V643h-2zM586 580h2V635h-2zM588 580h2V627h-2zM590 580h2V623h-2zM592 580h2V621h-2zM594 580h2V614h-2zM596 580h2V605h-2zM598 580h2V604h-2zM600 580h2V603h-2zM602 580h2V605h-2zM604 580h2V602h-2zM606 580h2V601h-2zM608 580h2V602h-2zM610 580h2V605h-2zM612 580h2V607h-2zM614 580h2V600h-2zM616 580h2V596h-2zM618 580h2V593h-2zM620 580h2V591h-2zM622 580h2V588h-2zM624 580h2V584h-2zM626 580h2V582h-2zM628 580h2V581h-2zM630 579h2V580h-2zM632 575h2V580h-2zM634 574h2V580h-2zM636 569h2V580h-2zM638 566h2V580h-2zM640 562h2V580h-2zM642 562h2V580h-2zM644 561h2V580h-2zM646 559h2V580h-2zM648 558h2V580h-2zM650 557h2V580h-2zM652 554h2V580h-2zM654 557h2V580h-2zM656 559h2V580h-2zM658 556h2V580h-2zM660 566h2V580h-2zM662 574h2V580h-2zM664 580h2V589h-2zM666 580h2V602h-2zM668 580h2V619h-2zM670 580h2V631h-2zM672 580h2V631h-2zM674 580h2V620h-2zM676 580h2V614h-2zM678 580h2V603h-2zM680 580h2V603h-2zM682 580h2V597h-2zM684 580h2V592h-2zM686 580h2V586h-2zM688 577h2V580h-2zM690 574h2V580h-2zM692 570h2V580h-2zM694 570h2V580h-2zM696 565h2V580h-2zM698 565h2V580h-2zM700 564h2V580h-2zM702 562h2V580h-2zM704 560h2V580h-2zM706 558h2V580h-2zM708 558h2V580h-2zM710 558h2V580h-2zM712 560h2V580h-2zM714 561h2V580h-2zM716 561h2V580h-2zM718 561h2V580h-2zM720 560h2V580h-2zM722 556h2V580h-2zM724 550h2V580h-2zM726 548h2V580h-2zM728 552h2V580h-2zM730 552h2V580h-2zM732 552h2V580h-2zM734 552h2V580h-2zM736 552h2V580h-2zM738 551h2V580h-2zM740 550h2V580h-2zM742 549h2V580h-2zM744 548h2V580h-2zM746 548h2V580h-2zM748 548h2V580h-2zM750 550h2V580h-2zM752 551h2V580h-2zM754 551h2V580h-2zM756 552h2V580h-2zM758 554h2V580h-2zM760 549h2V580h-2zM762 546h2V580h-2zM764 544h2V580h-2zM766 544h2V580h-2zM768 546h2V580h-2zM770 549h2V580h-2zM772 551h2V580h-2zM774 555h2V580h-2zM776 558h2V580h-2zM778 561h2V580h-2zM780 564h2V580h-2zM782 565h2V580h-2zM784 566h2V580h-2zM786 566h2V580h-2zM788 567h2V580h-2zM790 568h2V580h-2zM792 569h2V580h-2zM794 570h2V580h-2zM796 571h2V580h-2zM798 570h2V580h-2zM800 562h2V580h-2zM802 555h2V580h-2zM804 548h2V580h-2zM806 543h2V580h-2zM808 538h2V580h-2zM810 536h2V580h-2zM812 535h2V580h-2zM814 534h2V580h-2zM816 534h2V580h-2zM818 538h2V580h-2zM820 546h2V580h-2zM822 552h2V580h-2zM824 556h2V580h-2zM826 559h2V580h-2zM828 562h2V580h-2zM830 567h2V580h-2zM832 568h2V580h-2zM834 580h2V592h-2zM836 580h2V604h-2zM838 580h2V622h-2zM840 580h2V635h-2zM842 580h2V646h-2zM844 580h2V646h-2zM846 580h2V648h-2zM848 580h2V649h-2zM850 580h2V650h-2zM852 580h2V649h-2zM854 580h2V646h-2zM856 580h2V642h-2zM858 580h2V639h-2zM860 580h2V638h-2zM862 580h2V635h-2zM864 580h2V632h-2zM866 580h2V632h-2zM868 580h2V629h-2zM870 580h2V626h-2zM872 580h2V624h-2zM874 580h2V624h-2zM876 580h2V629h-2zM878 580h2V638h-2zM880 580h2V638h-2zM882 580h2V640h-2zM884 580h2V645h-2zM886 580h2V648h-2zM888 580h2V648h-2zM890 580h2V648h-2zM892 580h2V644h-2zM894 580h2V640h-2zM896 580h2V637h-2zM898 580h2V634h-2zM900 580h2V632h-2zM902 580h2V628h-2zM904 580h2V630h-2zM906 580h2V632h-2zM908 580h2V631h-2zM910 580h2V626h-2zM912 580h2V622h-2zM914 580h2V616h-2zM916 580h2V610h-2zM918 580h2V598h-2zM920 580h2V583h-2zM922 567h2V580h-2zM924 552h2V580h-2zM926 543h2V580h-2zM928 535h2V580h-2zM930 528h2V580h-2zM932 525h2V580h-2zM934 521h2V580h-2zM936 516h2V580h-2zM938 510h2V580h-2zM940 508h2V580h-2zM942 503h2V580h-2zM944 503h2V580h-2zM946 508h2V580h-2zM948 512h2V580h-2zM950 518h2V580h-2zM952 525h2V580h-2zM954 532h2V580h-2zM956 542h2V580h-2zM958 551h2V580h-2zM960 557h2V580h-2zM962 562h2V580h-2zM964 571h2V580h-2zM966 580h2V587h-2zM968 580h2V592h-2zM970 580h2V602h-2zM972 580h2V608h-2zM974 580h2V609h-2zM976 580h2V612h-2zM978 580h2V612h-2z" fill="#c0c0c0"/><path d="M1 542h1v1h-1zM2 542h1v1h-1zM3 541h1v1h-1zM4 540h1v1h-1zM5 540h1v1h-1zM6 540h1v1h-1zM7 541h1v1h-1zM8 542h1v1h-1zM9 542h1v1h-1zM10 543h1v2h-1zM11 545h1v2h-1zM12 547h1v2h-1zM13 549h1v2h-1zM14 551h1v3h-1zM15 554h1v2h-1zM16 556h1v2h-1zM17 558h1v3h-1zM18 561h1v2h-1zM19 563h1v3h-1zM20 566h1v2h-1zM21 568h1v3h-1zM22 571h1v2h-1zM23 573h1v2h-1zM24 575h1v3h-1zM25 578h1v1h-1zM26 579h1v2h-1zM27 581h1v1h-1zM28 582h1v1h-1zM29 582h1v1h-1zM30 582h1v1h-1zM31 583h1v1h-1zM32 582h1v1h-1zM33 582h1v1h-1zM34 580h1v2h-1zM35 579h1v1h-1zM36 576h1v3h-1zM37 575h1v1h-1zM38 572h1v3h-1zM39 571h1v1h-1zM40 568h1v3h-1zM41 567h1v1h-1zM42 565h1v2h-1zM43 564h1v1h-1zM44 562h1v2h-1zM45 561h1v1h-1zM46 560h1v1h-1zM47 559h1v1h-1zM48 558h1v1h-1zM49 557h1v1h-1zM50 556h1v1h-1zM51 556h1v1h-1zM52 556h1v1h-1zM53 555h1v1h-1zM54 554h1v1h-1zM55 554h1v1h-1zM56 554h1v1h-1zM57 553h1v1h-1zM58 551h1v2h-1zM59 550h1v1h-1zM60 548h1v2h-1zM61 547h1v1h-1zM62 546h1v1h-1zM63 545h1v1h-1zM64 543h1v2h-1zM65 542h1v1h-1zM66 540h1v2h-1zM67 539h1v1h-1zM68 538h1v1h-1zM69 537h1v1h-1zM70 536h1v1h-1zM71 535h1v1h-1zM72 534h1v1h-1zM73 533h1v1h-1zM74 532h1v1h-1zM75 531h1v1h-1zM76 530h1v1h-1zM77 529h1v1h-1zM78 528h1v1h-1zM79 528h1v1h-1zM80 527h1v1h-1zM81 526h1v1h-1zM82 526h1v1h-1zM83 525h1v1h-1zM84 525h1v1h-1zM85 525h1v1h-1zM86 525h1v1h-1zM87 525h1v1h-1zM88 524h1v1h-1zM89 524h1v1h-1zM90 524h1v1h-1zM91 523h1v1h-1zM92 522h1v1h-1zM93 522h1v1h-1zM94 520h1v2h-1zM95 519h1v1h-1zM96 518h1v1h-1zM97 517h1v1h-1zM98 514h1v3h-1zM99 513h1v1h-1zM100 511h1v2h-1zM101 510h1v1h-1zM102 507h1v3h-1zM103 506h1v1h-1zM104 503h1v3h-1zM105 502h1v1h-1zM106 500h1v2h-1zM107 499h1v1h-1zM108 497h1v2h-1zM109 496h1v1h-1zM110 495h1v1h-1zM111 494h1v1h-1zM112 494h1v1h-1zM113 493h1v1h-1zM114 492h1v1h-1zM115 492h1v1h-1zM116 492h1v1h-1zM117 492h1v1h-1zM118 492h1v1h-1zM119 493h1v1h-1zM120 494h1v2h-1zM121 496h1v1h-1zM122 497h1v3h-1zM123 500h1v2h-1zM124 502h1v2h-1zM125 504h1v3h-1zM126 507h1v3h-1zM127 510h1v3h-1zM128 513h1v2h-1zM129 515h1v3h-1zM130 518h1v3h-1zM131 521h1v3h-1zM132 524h1v3h-1zM133 527h1v3h-1zM134 530h1v3h-1zM135 533h1v3h-1zM136 536h1v4h-1zM137 540h1v3h-1zM138 543h1v2h-1zM139 545h1v3h-1zM140 548h1v2h-1zM141 550h1v2h-1zM142 552h1v2h-1zM143 554h1v1h-1zM144 555h1v2h-1zM145 557h1v1h-1zM146 558h1v2h-1zM147 560h1v1h-1zM148 561h1v2h-1zM149 563h1v1h-1zM150 564h1v1h-1zM151 565h1v1h-1zM152 566h1v1h-1zM153 567h1v1h-1zM154 568h1v1h-1zM155 569h1v1h-1zM156 570h1v1h-1zM157 571h1v1h-1zM158 572h1v1h-1zM159 572h1v1h-1zM160 572h1v1h-1zM161 572h1v1h-1zM162 573h1v2h-1zM163 575h1v1h-1zM164 576h1v1h-1zM165 576h1v1h-1zM166 576h1v1h-1zM167 577h1v1h-1zM168 578h1v1h-1zM169 578h1v1h-1zM170 578h1v1h-1zM171 579h1v1h-1zM172 579h1v1h-1zM173 579h1v1h-1zM174 578h1v1h-1zM175 577h1v1h-1zM176 576h1v1h-1zM177 576h1v1h-1zM178 576h1v1h-1zM179 575h1v1h-1zM180 574h1v1h-1zM181 574h1v1h-1zM182 574h1v1h-1zM183 573h1v1h-1zM184 572h1v1h-1zM185 572h1v1h-1zM186 572h1v1h-1zM187 571h1v1h-1zM188 571h1v1h-1zM189 571h1v1h-1zM190 570h1v1h-1zM191 570h1v1h-1zM192 570h1v1h-1zM193 570h1v1h-1zM194 570h1v1h-1zM195 570h1v1h-1zM196 570h1v1h-1zM197 569h1v1h-1zM198 568h1v1h-1zM199 568h1v1h-1zM200 568h1v1h-1zM201 567h1v1h-1zM202 566h1v1h-1zM203 566h1v1h-1zM204 566h1v1h-1zM205 566h1v1h-1zM206 566h1v1h-1zM207 565h1v1h-1zM208 565h1v1h-1zM209 565h1v1h-1zM210 565h1v1h-1zM211 565h1v1h-1zM212 566h1v1h-1zM213 566h1v1h-1zM214 566h1v1h-1zM215 567h1v1h-1zM216 568h1v1h-1zM217 568h1v1h-1zM218 568h1v1h-1zM219 569h1v1h-1zM220 570h1v1h-1zM221 570h1v1h-1zM222 570h1v1h-1zM223 571h1v1h-1zM224 572h1v1h-1zM225 572h1v1h-1zM226 572h1v1h-1zM227 572h1v1h-1zM228 572h1v1h-1zM229 572h1v1h-1zM230 572h1v1h-1zM231 571h1v1h-1zM232 570h1v1h-1zM233 570h1v1h-1zM234 567h1v3h-1zM235 565h1v2h-1zM236 563h1v2h-1zM237 561h1v2h-1zM238 559h1v2h-1zM239 558h1v1h-1zM240 556h1v2h-1zM241 555h1v1h-1zM242 552h1v3h-1zM243 551h1v1h-1zM244 549h1v2h-1zM245 548h1v1h-1zM246 547h1v1h-1zM247 546h1v1h-1zM248 546h1v1h-1zM249 545h1v1h-1zM250 545h1v1h-1zM251 545h1v1h-1zM252 546h1v1h-1zM253 547h1v1h-1zM254 548h1v1h-1zM255 549h1v1h-1zM256 550h1v1h-1zM257 550h1v1h-1zM258 551h1v1h-1zM259 552h1v1h-1zM260 552h1v1h-1zM261 553h1v1h-1zM262 553h1v1h-1zM263 553h1v1h-1zM264 552h1v1h-1zM265 552h1v1h-1zM266 552h1v1h-1zM267 551h1v1h-1zM268 549h1v2h-1zM269 547h1v2h-1zM270 545h1v2h-1zM271 542h1v3h-1zM272 538h1v4h-1zM273 535h1v3h-1zM274 531h1v4h-1zM275 528h1v3h-1zM276 525h1v3h-1zM277 522h1v3h-1zM278 520h1v2h-1zM279 518h1v2h-1zM280 515h1v3h-1zM281 514h1v1h-1zM282 513h1v1h-1zM283 512h1v1h-1zM284 512h1v1h-1zM285 511h1v1h-1zM286 510h1v1h-1zM287 510h1v1h-1zM288 510h1v1h-1zM289 511h1v1h-1zM290 512h1v1h-1zM291 513h1v2h-1zM292 515h1v2h-1zM293 517h1v3h-1zM294 520h1v2h-1zM295 522h1v3h-1zM296 525h1v2h-1zM297 527h1v3h-1zM298 530h1v2h-1zM299 532h1v2h-1zM300 534h1v3h-1zM301 537h1v2h-1zM302 539h1v3h-1zM303 542h1v3h-1zM304 545h1v2h-1zM305 547h1v3h-1zM306 550h1v2h-1zM307 552h1v2h-1zM308 554h1v2h-1zM309 556h1v1h-1zM310 557h1v2h-1zM311 559h1v1h-1zM312 560h1v1h-1zM313 561h1v1h-1zM314 562h1v1h-1zM315 562h1v1h-1zM316 562h1v1h-1zM317 562h1v1h-1zM318 562h1v1h-1zM319 562h1v1h-1zM320 562h1v1h-1zM321 562h1v1h-1zM322 562h1v1h-1zM323 561h1v1h-1zM324 561h1v1h-1zM325 561h1v1h-1zM326 561h1v1h-1zM327 561h1v1h-1zM328 561h1v1h-1zM329 561h1v1h-1zM330 562h1v1h-1zM331 562h1v1h-1zM332 562h1v1h-1zM333 562h1v1h-1zM334 562h1v1h-1zM335 563h1v1h-1zM336 563h1v1h-1zM337 563h1v1h-1zM338 563h1v1h-1zM339 563h1v1h-1zM340 562h1v1h-1zM341 562h1v1h-1zM342 562h1v1h-1zM343 561h1v1h-1zM344 560h1v1h-1zM345 559h1v1h-1zM346 558h1v1h-1zM347 558h1v1h-1zM348 558h1v1h-1zM349 557h1v1h-1zM350 555h1v2h-1zM351 554h1v1h-1zM352 553h1v1h-1zM353 552h1v1h-1zM354 552h1v1h-1zM355 552h1v1h-1zM356 552h1v1h-1zM357 551h1v1h-1zM358 552h1v1h-1zM359 552h1v1h-1zM360 552h1v1h-1zM361 553h1v1h-1zM362 554h1v1h-1zM363 554h1v1h-1zM364 555h1v1h-1zM365 556h1v1h-1zM366 556h1v1h-1zM367 557h1v1h-1zM368 558h1v1h-1zM369 559h1v1h-1zM370 560h1v1h-1zM371 560h1v1h-1zM372 560h1v1h-1zM373 560h1v1h-1zM374 560h1v1h-1zM375 561h1v1h-1zM376 561h1v1h-1zM377 561h1v1h-1zM378 560h1v1h-1zM379 560h1v1h-1zM380 560h1v1h-1zM381 559h1v1h-1zM382 558h1v1h-1zM383 557h1v1h-1zM384 556h1v1h-1zM385 555h1v1h-1zM386 554h1v1h-1zM387 553h1v1h-1zM388 552h1v1h-1zM389 551h1v1h-1zM390 550h1v1h-1zM391 549h1v1h-1zM392 547h1v2h-1zM393 546h1v1h-1zM394 545h1v1h-1zM395 544h1v1h-1zM396 543h1v1h-1zM397 542h1v1h-1zM398 542h1v1h-1zM399 541h1v1h-1zM400 540h1v1h-1zM401 540h1v1h-1zM402 540h1v1h-1zM403 541h1v1h-1zM404 542h1v1h-1zM405 542h1v1h-1zM406 543h1v1h-1zM407 544h1v1h-1zM408 545h1v1h-1zM409 546h1v1h-1zM410 547h1v1h-1zM411 548h1v1h-1zM412 549h1v1h-1zM413 550h1v1h-1zM414 551h1v1h-1zM415 552h1v1h-1zM416 553h1v1h-1zM417 554h1v1h-1zM418 554h1v1h-1zM419 555h1v1h-1zM420 554h1v1h-1zM421 554h1v1h-1zM422 554h1v1h-1zM423 553h1v1h-1zM424 552h1v1h-1zM425 551h1v1h-1zM426 549h1v2h-1zM427 548h1v1h-1zM428 546h1v2h-1zM429 545h1v1h-1zM430 542h1v3h-1zM431 540h1v2h-1zM432 538h1v2h-1zM433 535h1v3h-1zM434 533h1v2h-1zM435 531h1v2h-1zM436 528h1v3h-1zM437 527h1v1h-1zM438 525h1v2h-1zM439 524h1v1h-1zM440 522h1v2h-1zM441 521h1v1h-1zM442 520h1v1h-1zM443 519h1v1h-1zM444 518h1v1h-1zM445 517h1v1h-1zM446 516h1v1h-1zM447 516h1v1h-1zM448 516h1v1h-1zM449 515h1v1h-1zM450 515h1v1h-1zM451 515h1v1h-1zM452 516h1v1h-1zM453 516h1v1h-1zM454 516h1v1h-1zM455 517h1v1h-1zM456 518h1v1h-1zM457 519h1v1h-1zM458 520h1v3h-1zM459 523h1v1h-1zM460 524h1v3h-1zM461 527h1v1h-1zM462 528h1v3h-1zM463 531h1v1h-1zM464 532h1v3h-1zM465 535h1v1h-1zM466 536h1v3h-1zM467 539h1v1h-1zM468 540h1v2h-1zM469 542h1v1h-1zM470 542h1v1h-1zM471 543h1v1h-1zM472 544h1v1h-1zM473 545h1v1h-1zM474 545h1v1h-1zM475 545h1v1h-1zM476 545h1v1h-1zM477 545h1v1h-1zM478 545h1v1h-1zM479 545h1v1h-1zM480 545h1v1h-1zM481 545h1v1h-1zM482 545h1v1h-1zM483 545h1v1h-1zM484 545h1v1h-1zM485 545h1v1h-1zM486 546h1v1h-1zM487 546h1v1h-1zM488 546h1v1h-1zM489 547h1v1h-1zM490 548h1v1h-1zM491 548h1v1h-1zM492 549h1v1h-1zM493 550h1v1h-1zM494 551h1v2h-1zM495 553h1v1h-1zM496 554h1v1h-1zM497 555h1v1h-1zM498 556h1v1h-1zM499 557h1v1h-1zM500 558h1v1h-1zM501 559h1v1h-1zM502 560h1v1h-1zM503 560h1v1h-1zM504 560h1v1h-1zM505 561h1v1h-1zM506 562h1v1h-1zM507 562h1v1h-1zM508 562h1v1h-1zM509 562h1v1h-1zM510 562h1v1h-1zM511 563h1v1h-1zM512 563h1v1h-1zM513 563h1v1h-1zM514 564h1v1h-1zM515 565h1v1h-1zM516 566h1v1h-1zM517 567h1v1h-1zM518 568h1v1h-1zM519 569h1v1h-1zM520 570h1v3h-1zM521 573h1v1h-1zM522 574h1v3h-1zM523 577h1v1h-1zM524 578h1v3h-1zM525 581h1v2h-1zM526 583h1v3h-1zM527 586h1v2h-1zM528 588h1v3h-1zM529 591h1v1h-1zM530 592h1v2h-1zM531 594h1v1h-1zM532 595h1v2h-1zM533 597h1v1h-1zM534 598h1v1h-1zM535 598h1v1h-1zM536 598h1v1h-1zM537 599h1v1h-1zM538 599h1v1h-1zM539 599h1v1h-1zM540 599h1v1h-1zM541 599h1v1h-1zM542 599h1v1h-1zM543 599h1v1h-1zM544 600h1v1h-1zM545 600h1v1h-1zM546 600h1v1h-1zM547 601h1v1h-1zM548 602h1v1h-1zM549 602h1v1h-1zM550 603h1v1h-1zM551 604h1v1h-1zM552 605h1v2h-1zM553 607h1v1h-1zM554 608h1v2h-1zM555 610h1v1h-1zM556 611h1v1h-1zM557 612h1v1h-1zM558 613h1v1h-1zM559 614h1v1h-1zM560 614h1v1h-1zM561 615h1v1h-1zM562 616h1v1h-1zM563 616h1v1h-1zM564 616h1v1h-1zM565 615h1v1h-1zM566 614h1v1h-1zM567 614h1v1h-1zM568 614h1v1h-1zM569 613h1v1h-1zM570 612h1v1h-1zM571 612h1v1h-1zM572 612h1v1h-1zM573 611h1v1h-1zM574 610h1v1h-1zM575 610h1v1h-1zM576 610h1v1h-1zM577 610h1v1h-1zM578 611h1v1h-1zM579 612h1v1h-1zM580 613h1v2h-1zM581 615h1v1h-1zM582 616h1v3h-1zM583 619h1v1h-1zM584 620h1v3h-1zM585 623h1v1h-1zM586 624h1v3h-1zM587 627h1v1h-1zM588 628h1v1h-1zM589 629h1v1h-1zM590 630h1v1h-1zM591 631h1v1h-1zM592 632h1v1h-1zM593 633h1v1h-1zM594 633h1v1h-1zM595 633h1v1h-1zM596 632h1v1h-1zM597 631h1v1h-1zM598 628h1v3h-1zM599 626h1v2h-1zM600 624h1v2h-1zM601 621h1v3h-1zM602 619h1v2h-1zM603 617h1v2h-1zM604 614h1v3h-1zM605 613h1v1h-1zM606 610h1v3h-1zM607 609h1v1h-1zM608 607h1v2h-1zM609 606h1v1h-1zM610 605h1v1h-1zM611 604h1v1h-1zM612 604h1v1h-1zM613 603h1v1h-1zM614 603h1v1h-1zM615 603h1v1h-1zM616 602h1v1h-1zM617 602h1v1h-1zM618 602h1v1h-1zM619 601h1v1h-1zM620 600h1v1h-1zM621 600h1v1h-1zM622 600h1v1h-1zM623 599h1v1h-1zM624 598h1v1h-1zM625 597h1v1h-1zM626 596h1v1h-1zM627 595h1v1h-1zM628 593h1v2h-1zM629 592h1v1h-1zM630 590h1v2h-1zM631 589h1v1h-1zM632 588h1v1h-1zM633 587h1v1h-1zM634 585h1v2h-1zM635 584h1v1h-1zM636 582h1v2h-1zM637 581h1v1h-1zM638 580h1v1h-1zM639 579h1v1h-1zM640 578h1v1h-1zM641 577h1v1h-1zM642 576h1v1h-1zM643 575h1v1h-1zM644 573h1v2h-1zM645 572h1v1h-1zM646 570h1v2h-1zM647 569h1v1h-1zM648 568h1v1h-1zM649 567h1v1h-1zM650 565h1v2h-1zM651 564h1v1h-1zM652 563h1v1h-1zM653 562h1v1h-1zM654 561h1v1h-1zM655 560h1v1h-1zM656 560h1v1h-1zM657 560h1v1h-1zM658 559h1v1h-1zM659 558h1v1h-1zM660 558h1v1h-1zM661 558h1v1h-1zM662 558h1v1h-1zM663 559h1v1h-1zM664 560h1v1h-1zM665 561h1v1h-1zM666 562h1v3h-1zM667 565h1v2h-1zM668 567h1v3h-1zM669 570h1v3h-1zM670 573h1v5h-1zM671 578h1v3h-1zM672 581h1v5h-1zM673 586h1v3h-1zM674 589h1v4h-1zM675 593h1v3h-1zM676 596h1v4h-1zM677 600h1v3h-1zM678 603h1v3h-1zM679 606h1v2h-1zM680 608h1v3h-1zM681 611h1v1h-1zM682 612h1v1h-1zM683 613h1v1h-1zM684 613h1v1h-1zM685 613h1v1h-1zM686 612h1v1h-1zM687 611h1v2h-1zM688 609h1v2h-1zM689 606h1v3h-1zM690 603h1v3h-1zM691 600h1v3h-1zM692 597h1v3h-1zM693 594h1v3h-1zM694 591h1v3h-1zM695 588h1v3h-1zM696 586h1v2h-1zM697 583h1v3h-1zM698 581h1v2h-1zM699 579h1v2h-1zM700 576h1v3h-1zM701 575h1v1h-1zM702 572h1v3h-1zM703 571h1v1h-1zM704 570h1v1h-1zM705 569h1v1h-1zM706 568h1v1h-1zM707 567h1v1h-1zM708 566h1v1h-1zM709 565h1v1h-1zM710 564h1v1h-1zM711 564h1v1h-1zM712 563h1v1h-1zM713 562h1v1h-1zM714 562h1v1h-1zM715 561h1v1h-1zM716 561h1v1h-1zM717 561h1v1h-1zM718 561h1v1h-1zM719 561h1v1h-1zM720 560h1v1h-1zM721 560h1v1h-1zM722 560h1v1h-1zM723 559h1v1h-1zM724 558h1v1h-1zM725 558h1v1h-1zM726 558h1v1h-1zM727 557h1v1h-1zM728 557h1v1h-1zM729 557h1v1h-1zM730 556h1v1h-1zM731 556h1v1h-1zM732 556h1v1h-1zM733 555h1v1h-1zM734 554h1v1h-1zM735 554h1v1h-1zM736 554h1v1h-1zM737 553h1v1h-1zM738 552h1v1h-1zM739 552h1v1h-1zM740 552h1v1h-1zM741 552h1v1h-1zM742 552h1v1h-1zM743 551h1v1h-1zM744 551h1v1h-1zM745 551h1v1h-1zM746 551h1v1h-1zM747 551h1v1h-1zM748 551h1v1h-1zM749 551h1v1h-1zM750 551h1v1h-1zM751 551h1v1h-1zM752 551h1v1h-1zM753 551h1v1h-1zM754 551h1v1h-1zM755 551h1v1h-1zM756 551h1v1h-1zM757 551h1v1h-1zM758 551h1v1h-1zM759 551h1v1h-1zM760 550h1v1h-1zM761 550h1v1h-1zM762 550h1v1h-1zM763 550h1v1h-1zM764 550h1v1h-1zM765 550h1v1h-1zM766 550h1v1h-1zM767 550h1v1h-1zM768 550h1v1h-1zM769 549h1v1h-1zM770 549h1v1h-1zM771 549h1v1h-1zM772 548h1v1h-1zM773 548h1v1h-1zM774 548h1v1h-1zM775 548h1v1h-1zM776 548h1v1h-1zM777 549h1v1h-1zM778 550h1v1h-1zM779 550h1v1h-1zM780 550h1v1h-1zM781 551h1v1h-1zM782 552h1v1h-1zM783 553h1v1h-1zM784 554h1v2h-1zM785 556h1v1h-1zM786 557h1v1h-1zM787 558h1v1h-1zM788 559h1v1h-1zM789 560h1v1h-1zM790 561h1v1h-1zM791 562h1v1h-1zM792 563h1v1h-1zM793 564h1v1h-1zM794 565h1v1h-1zM795 566h1v1h-1zM796 566h1v1h-1zM797 567h1v1h-1zM798 568h1v1h-1zM799 568h1v1h-1zM800 568h1v1h-1zM801 568h1v1h-1zM802 568h1v1h-1zM803 568h1v1h-1zM804 567h1v1h-1zM805 566h1v1h-1zM806 564h1v2h-1zM807 563h1v1h-1zM808 561h1v2h-1zM809 560h1v1h-1zM810 557h1v3h-1zM811 556h1v1h-1zM812 553h1v3h-1zM813 552h1v1h-1zM814 549h1v3h-1zM815 548h1v1h-1zM816 545h1v3h-1zM817 544h1v1h-1zM818 543h1v1h-1zM819 542h1v1h-1zM820 541h1v1h-1zM821 540h1v1h-1zM822 540h1v1h-1zM823 540h1v1h-1zM824 540h1v1h-1zM825 540h1v1h-1zM826 541h1v1h-1zM827 542h1v1h-1zM828 543h1v2h-1zM829 545h1v1h-1zM830 546h1v2h-1zM831 548h1v1h-1zM832 549h1v3h-1zM833 552h1v2h-1zM834 554h1v3h-1zM835 557h1v3h-1zM836 560h1v4h-1zM837 564h1v3h-1zM838 567h1v5h-1zM839 572h1v4h-1zM840 576h1v6h-1zM841 582h1v5h-1zM842 587h1v5h-1zM843 592h1v4h-1zM844 596h1v5h-1zM845 601h1v4h-1zM846 605h1v5h-1zM847 610h1v4h-1zM848 614h1v5h-1zM849 619h1v4h-1zM850 623h1v5h-1zM851 628h1v4h-1zM852 632h1v5h-1zM853 637h1v3h-1zM854 640h1v3h-1zM855 643h1v2h-1zM856 645h1v1h-1zM857 646h1v1h-1zM858 646h1v1h-1zM859 646h1v1h-1zM860 646h1v1h-1zM861 646h1v1h-1zM862 645h1v1h-1zM863 644h1v1h-1zM864 643h1v1h-1zM865 642h1v1h-1zM866 641h1v1h-1zM867 640h1v1h-1zM868 638h1v2h-1zM869 637h1v1h-1zM870 636h1v1h-1zM871 635h1v1h-1zM872 633h1v2h-1zM873 632h1v1h-1zM874 631h1v1h-1zM875 630h1v1h-1zM876 630h1v1h-1zM877 630h1v1h-1zM878 630h1v1h-1zM879 629h1v1h-1zM880 630h1v1h-1zM881 630h1v1h-1zM882 630h1v1h-1zM883 631h1v1h-1zM884 632h1v1h-1zM885 632h1v1h-1zM886 633h1v1h-1zM887 634h1v1h-1zM888 635h1v1h-1zM889 636h1v1h-1zM890 637h1v2h-1zM891 639h1v1h-1zM892 640h1v2h-1zM893 642h1v1h-1zM894 642h1v1h-1zM895 643h1v1h-1zM896 644h1v1h-1zM897 644h1v1h-1zM898 644h1v1h-1zM899 643h1v1h-1zM900 642h1v1h-1zM901 642h1v1h-1zM902 641h1v1h-1zM903 640h1v1h-1zM904 639h1v1h-1zM905 638h1v1h-1zM906 637h1v1h-1zM907 636h1v1h-1zM908 635h1v1h-1zM909 634h1v1h-1zM910 633h1v1h-1zM911 632h1v1h-1zM912 631h1v1h-1zM913 630h1v1h-1zM914 629h1v1h-1zM915 628h1v1h-1zM916 626h1v2h-1zM917 625h1v1h-1zM918 623h1v2h-1zM919 622h1v1h-1zM920 619h1v3h-1zM921 617h1v2h-1zM922 612h1v5h-1zM923 608h1v4h-1zM924 603h1v5h-1zM925 598h1v5h-1zM926 593h1v5h-1zM927 588h1v5h-1zM928 584h1v4h-1zM929 580h1v4h-1zM930 578h1v2h-1zM931 574h1v4h-1zM932 568h1v6h-1zM933 563h1v5h-1zM934 558h1v5h-1zM935 553h1v5h-1zM936 548h1v5h-1zM937 543h1v5h-1zM938 539h1v4h-1zM939 535h1v4h-1zM940 531h1v4h-1zM941 528h1v3h-1zM942 524h1v4h-1zM943 522h1v2h-1zM944 519h1v3h-1zM945 518h1v1h-1zM946 515h1v3h-1zM947 514h1v1h-1zM948 513h1v1h-1zM949 512h1v1h-1zM950 512h1v1h-1zM951 511h1v1h-1zM952 511h1v1h-1zM953 511h1v1h-1zM954 512h1v1h-1zM955 512h1v1h-1zM956 512h1v1h-1zM957 513h1v1h-1zM958 514h1v2h-1zM959 516h1v2h-1zM960 518h1v2h-1zM961 520h1v3h-1zM962 523h1v3h-1zM963 526h1v3h-1zM964 529h1v4h-1zM965 533h1v4h-1zM966 537h1v4h-1zM967 541h1v4h-1zM968 545h1v5h-1zM969 550h1v3h-1zM970 553h1v5h-1zM971 558h1v4h-1zM972 562h1v4h-1zM973 566h1v4h-1zM974 570h1v5h-1zM975 575h1v3h-1zM976 578h1v5h-1zM977 583h1v3h-1zM978 586h1v4h-1zM979 590h1v2h-1z" fill="#ff0000"/><rect x="1" y="217" width="1222" height="1" fill="#778899"/><path d="M1 134.5H1223" stroke="#32cd32" stroke-width="1" stroke-dasharray="9 6 3 6" fill="none"/><path d="M1 217.5H1223" stroke="#32cd32" stroke-width="1" stroke-dasharray="9 6 3 6" fill="none"/><path d="M1 221.5H1223" stroke="#32cd32" stroke-width="1" stroke-dasharray="9 6 3 6" fill="none"/><path d="M1 406h1V428h-1zM3 413h1V437h-1zM5 423h1V451h-1zM7 417h1V432h-1zM9 414h1V430h-1zM11 415h1V433h-1zM13 411h1V428h-1zM15 411h1V424h-1zM17 422h1V446h-1zM19 444h1V461h-1zM321 250h1V262h-1zM323 253h1V263h-1zM325 256h1V264h-1zM327 247h1V261h-1zM329 241h1V250h-1zM331 245h1V262h-1zM333 249h1V263h-1zM335 239h1V250h-1zM337 239h1V250h-1zM339 241h1V251h-1zM341 237h1V246h-1zM343 234h1V241h-1zM345 226h1V240h-1zM347 217h1V231h-1zM349 225h1V236h-1zM351 223h1V235h-1zM353 221h1V242h-1zM355 233h1V244h-1zM357 238h1V253h-1zM359 241h1V253h-1zM361 244h1V252h-1zM363 233h1V245h-1zM365 227h1V244h-1zM367 217h1V231h-1zM369 224h1V236h-1zM371 217h1V235h-1zM373 222h1V238h-1zM375 227h1V247h-1zM377 222h1V242h-1zM379 225h1V233h-1zM381 218h1V234h-1zM383 198h1V221h-1zM385 201h1V211h-1zM387 200h1V211h-1zM389 197h1V221h-1zM391 203h1V214h-1zM393 204h1V221h-1zM395 204h1V218h-1zM397 204h1V215h-1zM399 212h1V227h-1zM401 210h1V228h-1zM403 211h1V222h-1zM405 210h1V221h-1zM407 201h1V221h-1zM409 199h1V214h-1zM411 210h1V219h-1zM413 209h1V230h-1zM415 216h1V228h-1zM417 201h1V222h-1zM419 187h1V206h-1zM421 171h1V191h-1zM423 171h1V187h-1zM425 178h1V189h-1zM427 162h1V184h-1zM429 163h1V184h-1zM431 168h1V184h-1zM433 159h1V173h-1zM435 158h1V171h-1zM437 163h1V171h-1zM439 153h1V169h-1zM441 149h1V159h-1zM443 147h1V160h-1zM445 145h1V163h-1zM447 152h1V159h-1zM449 150h1V171h-1zM451 165h1V172h-1zM453 165h1V175h-1zM455 159h1V169h-1zM457 164h1V173h-1zM459 170h1V181h-1zM461 171h1V186h-1zM463 158h1V174h-1zM465 156h1V163h-1zM467 153h1V166h-1zM469 152h1V166h-1zM471 144h1V163h-1zM473 146h1V163h-1zM475 142h1V152h-1zM477 144h1V156h-1zM479 146h1V158h-1zM481 155h1V166h-1zM483 156h1V166h-1zM485 149h1V159h-1zM487 143h1V155h-1zM489 148h1V158h-1zM491 153h1V165h-1zM493 149h1V171h-1zM495 154h1V175h-1zM497 147h1V159h-1zM499 148h1V161h-1zM501 151h1V165h-1zM503 142h1V161h-1zM505 143h1V150h-1zM507 141h1V159h-1zM509 150h1V163h-1zM511 150h1V169h-1zM513 160h1V171h-1zM515 161h1V168h-1zM517 165h1V173h-1zM519 166h1V187h-1zM521 179h1V193h-1zM523 182h1V193h-1zM525 180h1V208h-1zM527 171h1V196h-1zM529 173h1V186h-1zM531 160h1V185h-1zM533 158h1V171h-1zM535 156h1V164h-1zM537 154h1V171h-1zM539 165h1V189h-1zM541 183h1V197h-1zM543 189h1V208h-1zM545 189h1V204h-1zM547 190h1V205h-1zM549 187h1V204h-1zM551 188h1V205h-1zM553 183h1V201h-1zM555 191h1V216h-1zM557 193h1V211h-1zM559 185h1V202h-1zM561 180h1V195h-1zM563 182h1V207h-1zM565 197h1V220h-1zM567 185h1V199h-1zM569 182h1V195h-1zM571 179h1V203h-1zM573 193h1V205h-1zM575 201h1V223h-1zM577 215h1V246h-1zM579 237h1V257h-1zM581 241h1V259h-1zM583 236h1V255h-1zM585 219h1V243h-1zM587 208h1V223h-1zM589 205h1V215h-1zM591 207h1V222h-1zM593 213h1V225h-1zM595 204h1V222h-1zM597 195h1V210h-1zM599 197h1V213h-1zM601 207h1V216h-1zM603 214h1V230h-1zM605 209h1V224h-1zM607 211h1V219h-1zM609 214h1V229h-1zM611 222h1V240h-1zM613 224h1V241h-1zM615 208h1V227h-1zM617 205h1V215h-1zM619 203h1V214h-1zM621 208h1V222h-1zM623 209h1V219h-1zM625 200h1V213h-1zM627 200h1V208h-1zM629 204h1V211h-1zM631 199h1V211h-1zM633 195h1V207h-1zM635 199h1V206h-1zM637 191h1V206h-1zM639 186h1V195h-1zM641 183h1V198h-1zM643 186h1V200h-1zM645 193h1V201h-1zM647 188h1V197h-1zM649 189h1V198h-1zM651 188h1V197h-1zM653 183h1V190h-1zM655 181h1V197h-1zM657 192h1V212h-1zM659 161h1V209h-1zM661 177h1V235h-1zM663 208h1V230h-1zM665 217h1V265h-1zM667 216h1V249h-1zM669 237h1V271h-1zM671 264h1V276h-1zM673 235h1V264h-1zM675 205h1V237h-1zM677 204h1V218h-1zM679 204h1V219h-1zM681 209h1V221h-1zM683 202h1V220h-1zM685 203h1V214h-1zM687 198h1V212h-1zM689 190h1V202h-1zM691 192h1V202h-1zM693 195h1V205h-1zM695 194h1V208h-1zM697 191h1V208h-1zM699 192h1V207h-1zM701 193h1V207h-1zM703 192h1V201h-1zM705 192h1V198h-1zM707 189h1V196h-1zM709 191h1V198h-1zM711 192h1V196h-1zM713 194h1V198h-1zM715 197h1V200h-1zM717 196h1V199h-1zM719 189h1V197h-1zM721 186h1V191h-1zM723 180h1V189h-1zM725 171h1V181h-1zM727 167h1V179h-1zM729 179h1V193h-1zM731 180h1V192h-1zM733 181h1V182h-1zM735 180h1V184h-1zM737 177h1V183h-1zM739 174h1V179h-1zM741 174h1V177h-1zM743 172h1V176h-1zM745 171h1V177h-1zM747 172h1V175h-1zM749 171h1V174h-1zM751 170h1V175h-1zM753 173h1V175h-1zM755 171h1V175h-1zM757 171h1V175h-1zM759 171h1V174h-1zM761 153h1V174h-1zM763 151h1V159h-1zM765 156h1V164h-1zM767 157h1V162h-1zM769 154h1V164h-1zM771 162h1V169h-1zM773 163h1V167h-1zM775 164h1V170h-1zM777 168h1V175h-1zM779 168h1V174h-1zM781 170h1V174h-1zM783 166h1V172h-1zM785 167h1V170h-1zM787 162h1V170h-1zM789 162h1V170h-1zM791 165h1V170h-1zM793 165h1V171h-1zM795 166h1V170h-1zM797 167h1V171h-1zM799 147h1V171h-1zM801 139h1V163h-1zM803 137h1V145h-1zM805 131h1V141h-1zM807 132h1V141h-1zM809 128h1V134h-1zM811 127h1V136h-1zM813 131h1V138h-1zM815 130h1V140h-1zM817 125h1V138h-1zM819 134h1V148h-1zM821 144h1V164h-1zM823 151h1V165h-1zM825 144h1V158h-1zM827 147h1V152h-1zM829 148h1V157h-1zM831 146h1V163h-1zM833 147h1V158h-1zM835 151h1V219h-1zM837 199h1V218h-1zM839 194h1V225h-1zM841 214h1V230h-1zM843 209h1V229h-1zM845 204h1V225h-1zM847 204h1V214h-1zM849 202h1V219h-1zM851 206h1V219h-1zM853 206h1V226h-1zM855 203h1V213h-1zM857 199h1V217h-1zM859 199h1V208h-1zM861 203h1V224h-1zM863 203h1V215h-1zM865 202h1V213h-1zM867 206h1V217h-1zM869 208h1V221h-1zM871 208h1V217h-1zM873 206h1V216h-1zM875 210h1V221h-1zM877 218h1V235h-1zM879 233h1V253h-1zM881 235h1V256h-1zM883 227h1V238h-1zM885 235h1V259h-1zM887 248h1V259h-1zM889 241h1V257h-1zM891 242h1V253h-1zM893 239h1V252h-1zM895 233h1V243h-1zM897 234h1V240h-1zM899 238h1V250h-1zM901 237h1V243h-1zM903 231h1V242h-1zM905 237h1V258h-1zM907 250h1V259h-1zM909 249h1V260h-1zM911 239h1V254h-1zM913 239h1V248h-1zM915 234h1V241h-1zM917 231h1V238h-1zM919 211h1V234h-1zM921 196h1V215h-1zM923 180h1V197h-1zM925 172h1V188h-1zM927 173h1V193h-1zM929 177h1V190h-1zM931 174h1V188h-1zM933 170h1V184h-1zM935 174h1V190h-1zM937 167h1V179h-1zM939 156h1V172h-1zM941 154h1V165h-1zM943 154h1V173h-1zM945 150h1V164h-1zM947 159h1V178h-1zM949 167h1V181h-1zM951 165h1V179h-1zM953 174h1V185h-1zM955 181h1V188h-1zM957 182h1V193h-1zM959 191h1V201h-1zM961 199h1V212h-1zM963 186h1V201h-1zM965 188h1V213h-1zM967 210h1V236h-1zM969 206h1V234h-1zM971 212h1V237h-1zM973 224h1V239h-1zM975 208h1V227h-1zM977 215h1V223h-1zM979 215h1V236h-1z" fill="#00ff00"/><rect x="0" y="105" width="1224" height="1" fill="#fff"/><rect x="0" y="105" width="1" height="370" fill="#fff"/><rect x="0" y="474" width="1224" height="1" fill="#fff"/><rect x="1223" y="105" width="1" height="370" fill="#fff"/><rect x="0" y="476" width="1224" height="1" fill="#fff"/><rect x="0" y="476" width="1" height="184" fill="#fff"/><rect x="0" y="659" width="1224" height="1" fill="#fff"/><rect x="1223" y="476" width="1" height="184" fill="#fff"/><rect x="1224" y="135" width="2" height="1" fill="#fff"/><rect x="1224" y="169" width="2" height="1" fill="#fff"/><rect x="1224" y="203" width="2" height="1" fill="#fff"/><rect x="1224" y="236" width="2" height="1" fill="#fff"/><rect x="1224" y="270" width="2" height="1" fill="#fff"/><rect x="1224" y="304" width="2" height="1" fill="#fff"/><rect x="1224" y="338" width="2" height="1" fill="#fff"/><rect x="1224" y="371" width="2" height="1" fill="#fff"/><rect x="1224" y="405" width="2" height="1" fill="#fff"/><rect x="1224" y="438" width="2" height="1" fill="#fff"/><rect x="1224" y="471" width="2" height="1" fill="#fff"/><rect x="1224" y="478" width="2" height="1" fill="#fff"/><rect x="1224" y="580" width="2" height="1" fill="#fff"/><rect x="1224" y="658" width="2" height="1" fill="#fff"/><rect x="1" y="660" width="1" height="3" fill="#fff"/><rect x="65" y="660" width="1" height="3" fill="#fff"/><rect x="129" y="660" width="1" height="3" fill="#fff"/><rect x="193" y="660" width="1" height="3" fill="#fff"/><rect x="257" y="660" width="1" height="3" fill="#fff"/><rect x="321" y="660" width="1" height="3" fill="#fff"/><rect x="385" y="660" width="1" height="3" fill="#fff"/><rect x="449" y="660" width="1" height="3" fill="#fff"/><rect x="513" y="660" width="1" height="3" fill="#fff"/><rect x="577" y="660" width="1" height="3" fill="#fff"/><rect x="641" y="660" width="1" height="3" fill="#fff"/><rect x="705" y="660" width="1" height="3" fill="#fff"/><rect x="769" y="660" width="1" height="3" fill="#fff"/><rect x="833" y="660" width="1" height="3" fill="#fff"/><rect x="897" y="660" width="1" height="3" fill="#fff"/><rect x="961" y="660" width="1" height="3" fill="#fff"/><path d="M973 106h10l-5 5.500z" fill="#8296aa" shape-rendering="geometricPrecision"/><path d="M1 652v7h7z" fill="#8296aa" shape-rendering="geometricPrecision"/><path d="M3.8 112h7.4l-3.7 4.2z" fill="#fff" shape-rendering="geometricPrecision"/><rect x="1225" y="212" width="41" height="11" fill="#fff"/><g shape-rendering="geometricPrecision"><circle cx="1213" cy="115.500" r="5" fill="none" stroke="#fff" stroke-width="1"/><rect x="1210.800" y="113.300" width="1.200" height="1.600" fill="#fff"/><rect x="1214" y="113.300" width="1.200" height="1.600" fill="#fff"/><path d="M1210.300 116.500q2.700 3 5.400 0" stroke="#fff" stroke-width="1" fill="none"/></g></svg><span style="left:16.50px;top:7px;font-size:10px;letter-spacing:-0.283px;">AUDUSD,M5  0.70098 0.70115 0.70039 0.70110</span><span style="left:7.20px;top:22px;font-size:10px;letter-spacing:-0.350px;">#123510277 sell 2.00</span><span style="left:7.20px;top:105px;font-size:10px;letter-spacing:-0.350px;">#123470841 sell 1.00</span><span style="left:7.20px;top:109px;font-size:10px;letter-spacing:-0.431px;">#123547937 buy 1.00</span><span style="left:1151.00px;top:8px;font-size:9px;letter-spacing:0.097px;font-family:"Noto Sans CJK SC","Liberation Sans",sans-serif;">交易宝精英版</span><span style="left:1228.60px;top:29px;font-size:10px;letter-spacing:-0.393px;">0.70420</span><span style="left:1228.60px;top:63px;font-size:10px;letter-spacing:-0.393px;">0.70290</span><span style="left:1228.60px;top:97px;font-size:10px;letter-spacing:-0.393px;">0.70160</span><span style="left:1228.60px;top:130px;font-size:10px;letter-spacing:-0.393px;">0.70035</span><span style="left:1228.60px;top:164px;font-size:10px;letter-spacing:-0.393px;">0.69905</span><span style="left:1228.60px;top:198px;font-size:10px;letter-spacing:-0.393px;">0.69775</span><span style="left:1228.60px;top:232px;font-size:10px;letter-spacing:-0.393px;">0.69645</span><span style="left:1228.60px;top:265px;font-size:10px;letter-spacing:-0.393px;">0.69520</span><span style="left:1228.60px;top:299px;font-size:10px;letter-spacing:-0.393px;">0.69390</span><span style="left:1228.60px;top:332px;font-size:10px;letter-spacing:-0.393px;">0.69265</span><span style="left:1228.60px;top:365px;font-size:10px;letter-spacing:-0.393px;">0.69140</span><span style="left:1228.60px;top:111px;font-size:10px;letter-spacing:-0.268px;color:#000;">0.70110</span><span style="left:1226.50px;top:377px;font-size:10px;letter-spacing:-0.388px;">0.000906</span><span style="left:1228.50px;top:474px;font-size:10px;letter-spacing:-0.156px;">0.00</span><span style="left:1227.00px;top:546px;font-size:10px;letter-spacing:-0.468px;">-0.000694</span><span style="left:4.50px;top:379px;font-size:10px;letter-spacing:-0.316px;">MACD(12,26,9) -0.000271 -0.000129</span><span style="left:0.50px;top:562px;font-size:10px;letter-spacing:-0.233px;">16 May 2022</span><span style="left:64.50px;top:562px;font-size:10px;letter-spacing:-0.237px;">16 May 20:20</span><span style="left:128.50px;top:562px;font-size:10px;letter-spacing:-0.237px;">16 May 23:00</span><span style="left:192.50px;top:562px;font-size:10px;letter-spacing:-0.237px;">17 May 01:40</span><span style="left:256.50px;top:562px;font-size:10px;letter-spacing:-0.237px;">17 May 04:20</span><span style="left:320.50px;top:562px;font-size:10px;letter-spacing:-0.237px;">17 May 07:00</span><span style="left:384.50px;top:562px;font-size:10px;letter-spacing:-0.237px;">17 May 09:40</span><span style="left:448.50px;top:562px;font-size:10px;letter-spacing:-0.237px;">17 May 12:20</span><span style="left:512.50px;top:562px;font-size:10px;letter-spacing:-0.237px;">17 May 15:00</span><span style="left:576.50px;top:562px;font-size:10px;letter-spacing:-0.237px;">17 May 17:40</span><span style="left:640.50px;top:562px;font-size:10px;letter-spacing:-0.237px;">17 May 20:20</span><span style="left:704.50px;top:562px;font-size:10px;letter-spacing:-0.237px;">17 May 23:00</span><span style="left:768.50px;top:562px;font-size:10px;letter-spacing:-0.237px;">18 May 01:45</span><span style="left:832.50px;top:562px;font-size:10px;letter-spacing:-0.237px;">18 May 04:25</span><span style="left:896.50px;top:562px;font-size:10px;letter-spacing:-0.237px;">18 May 07:05</span><span style="left:960.50px;top:562px;font-size:10px;letter-spacing:-0.237px;">18 May 09:45</span><div id="panel" class="abs"><div class="hd"></div><div style="left:10px;top:14.5px;width:5.5px;height:2px;background:#d8d8ee"></div><span style="left:30.30px;top:6px;font-size:12.4px;letter-spacing:0.000px;font-weight:bold;">移</span><span style="left:119.50px;top:6px;font-size:12.4px;letter-spacing:1.086px;font-weight:bold;">交易宝-精英版</span><div style="left:0;top:60px;width:80px;height:30px;background:#ebebeb;border-radius:3px"></div><span style="left:12.80px;top:37px;font-size:12.4px;letter-spacing:1.046px;color:#fff;font-weight:bold;">订单下单</span><span style="left:12.80px;top:67px;font-size:12.4px;letter-spacing:1.046px;color:#1a1a1a;font-weight:bold;">订单平仓</span><span style="left:12.80px;top:97px;font-size:12.4px;letter-spacing:1.046px;color:#fff;font-weight:bold;">订单修改</span><span style="left:12.80px;top:127px;font-size:12.4px;letter-spacing:1.046px;color:#fff;font-weight:bold;">挂单功能</span><span style="left:12.80px;top:157px;font-size:12.4px;letter-spacing:1.046px;color:#fff;font-weight:bold;">网址导航</span><span style="left:12.80px;top:187px;font-size:12.4px;letter-spacing:1.046px;color:#fff;font-weight:bold;">联系我们</span><span style="left:99.80px;top:37px;font-size:12.4px;letter-spacing:1.046px;font-weight:bold;">平仓模式</span><div style="left:160px;top:35px;width:120px;height:20px;background:#111;border-radius:3px"></div><span style="left:191.50px;top:36px;font-size:13px;letter-spacing:-0.125px;font-weight:bold;">AUDUSD</span><div style="left:100px;top:65px;width:80px;height:30px;background:#77dba5;border-radius:3px"></div><span style="left:112.90px;top:72px;font-size:12.4px;letter-spacing:0.879px;font-weight:500;">多单平仓</span><div style="left:200px;top:65px;width:80px;height:30px;background:#f46060;border-radius:3px"></div><span style="left:212.90px;top:72px;font-size:12.4px;letter-spacing:0.879px;font-weight:bold;">空单平仓</span><div style="left:100px;top:105px;width:180px;height:30px;background:#8a8a9c;border-radius:3px"></div><span style="left:162.90px;top:112px;font-size:12.4px;letter-spacing:0.879px;font-weight:bold;">全部平仓</span><div style="left:100px;top:145px;width:80px;height:30px;background:#77dba5;border-radius:3px"></div><span style="left:112.90px;top:152px;font-size:12.4px;letter-spacing:0.879px;font-weight:500;">盈利平仓</span><div style="left:200px;top:145px;width:80px;height:30px;background:#f46060;border-radius:3px"></div><span style="left:212.90px;top:152px;font-size:12.4px;letter-spacing:0.879px;font-weight:bold;">亏损平仓</span><span style="left:99.80px;top:184px;font-size:11px;letter-spacing:0.067px;font-weight:bold;">盈利大于</span><div style="left:145px;top:183px;width:30px;height:20px;background:#f0f0f0;border:1px solid #fff;border-radius:3px"></div><span style="left:151.00px;top:184px;font-size:11px;letter-spacing:-0.180px;color:#111;font-weight:bold;">100</span><span style="left:176.50px;top:184px;font-size:11px;letter-spacing:0.083px;font-weight:bold;">美元平仓，当前</span><span style="left:254.00px;top:184px;font-size:11px;letter-spacing:0.969px;font-weight:bold;">581.07</span><div style="left:100px;top:210px;width:180px;height:30px;background:#f46060;border-radius:3px"></div><span style="left:146.10px;top:217px;font-size:12.4px;letter-spacing:0.779px;font-weight:bold;">盈利平仓</span><span style="left:205.50px;top:217px;font-size:12.4px;letter-spacing:1.219px;font-weight:bold;">停用</span></div></div>
<div id="ctabs" class="abs"><svg width="1270" height="26" style="left:0;top:0"><rect x="0" y="0" width="1270" height="2" fill="#fff"/><rect x="0" y="2" width="1270" height="1" fill="#000"/><rect x="0" y="22" width="1270" height="1" fill="#fbfbfb"/><rect x="94" y="5" width="1" height="14" fill="#6a6a6a"/><rect x="182" y="5" width="1" height="14" fill="#6a6a6a"/><rect x="274" y="5" width="1" height="14" fill="#6a6a6a"/><rect x="370" y="5" width="1" height="14" fill="#6a6a6a"/><rect x="462" y="5" width="1" height="14" fill="#6a6a6a"/><rect x="554" y="5" width="1" height="14" fill="#6a6a6a"/><rect x="642" y="2" width="96" height="19" fill="#000"/><rect x="643" y="0" width="94" height="20" fill="#fff"/><path d="M1242 8v6.400l-3.200-3.200zM1258 8v6.400l3.200-3.200z" fill="#a09a9a"/></svg><span style="left:12.50px;top:4.8px;font-size:12.5px;letter-spacing:-0.381px;color:#868686;">USDCAD,H1</span><span style="left:103.40px;top:4.8px;font-size:12.5px;letter-spacing:-0.370px;color:#868686;">USDCHF,H1</span><span style="left:191.40px;top:4.8px;font-size:12.5px;letter-spacing:0.019px;color:#868686;">AUDCHF,M5</span><span style="left:285.80px;top:4.8px;font-size:12.5px;letter-spacing:-0.128px;color:#868686;">USDCAD,M5</span><span style="left:379.90px;top:4.8px;font-size:12.5px;letter-spacing:-0.305px;color:#868686;">GBPUSD,M5</span><span style="left:471.80px;top:4.8px;font-size:12.5px;letter-spacing:-0.303px;color:#868686;">EURUSD,M5</span><span style="left:564.40px;top:4.8px;font-size:12.5px;letter-spacing:-0.256px;color:#868686;">USDJPY,M5</span><span style="left:652.60px;top:4.8px;font-size:12.5px;letter-spacing:0.009px;color:#000;">AUDUSD,M5</span></div>
<div id="term" class="abs"><svg width="1270" height="171" style="left:0;top:0"><defs><linearGradient id="lg" x1="0" y1="0" x2="0" y2="1"><stop offset="0" stop-color="#e6edf3"/><stop offset=".45" stop-color="#d2e0ee"/><stop offset="1" stop-color="#b6cae2"/></linearGradient><clipPath id="tc"><rect x="12" y="1" width="1240" height="141"/></clipPath><linearGradient id="dg" x1="0" y1="0" x2="1" y2="1"><stop offset="0" stop-color="#ffffff"/><stop offset="1" stop-color="#dcdcdc"/></linearGradient></defs><rect x="0" y="0" width="11" height="167" fill="#f0f0f0"/><rect x="0" y="14" width="11" height="153" fill="url(#lg)"/><path d="M.3 3.300l5.400 4.400M5.700 3.300l-5.400 4.400" stroke="#000" stroke-width="1.800"/><rect x="11" y="0" width="1257" height="1" fill="#a0a0a0"/><rect x="11" y="0" width="1" height="167" fill="#a0a0a0"/><rect x="12" y="1" width="1256" height="141" fill="#fff"/><rect x="1268" y="0" width="1" height="167" fill="#fff"/><rect x="11" y="166" width="1258" height="1" fill="#fff"/><rect x="12" y="25" width="1238" height="21" fill="#0078d7"/><rect x="12" y="46" width="1238" height="21" fill="#ebebeb"/><rect x="12" y="46" width="1238" height="1" fill="#d8d8d8"/><rect x="12" y="67" width="1238" height="21" fill="#ffffff"/><rect x="12" y="67" width="1238" height="1" fill="#c8c8c8"/><rect x="12" y="88" width="1238" height="21" fill="#ebebeb"/><rect x="12" y="88" width="1238" height="1" fill="#c8c8c8"/><rect x="12" y="109" width="1238" height="21" fill="#ffffff"/><rect x="12" y="109" width="1238" height="1" fill="#c8c8c8"/><rect x="12" y="130" width="1238" height="12" fill="#ebebeb"/><rect x="12" y="130" width="1238" height="1" fill="#c8c8c8"/><rect x="110" y="1" width="1" height="24" fill="#e5e5e5"/><rect x="109" y="25" width="1" height="117" fill="#c0c0c0"/><rect x="248" y="1" width="1" height="24" fill="#e5e5e5"/><rect x="247" y="25" width="1" height="117" fill="#c0c0c0"/><rect x="317" y="1" width="1" height="24" fill="#e5e5e5"/><rect x="316" y="25" width="1" height="117" fill="#c0c0c0"/><rect x="370" y="1" width="1" height="24" fill="#e5e5e5"/><rect x="369" y="25" width="1" height="117" fill="#c0c0c0"/><rect x="439" y="1" width="1" height="24" fill="#e5e5e5"/><rect x="438" y="25" width="1" height="117" fill="#c0c0c0"/><rect x="515" y="1" width="1" height="24" fill="#e5e5e5"/><rect x="514" y="25" width="1" height="117" fill="#c0c0c0"/><rect x="591" y="1" width="1" height="24" fill="#e5e5e5"/><rect x="590" y="25" width="1" height="117" fill="#c0c0c0"/><rect x="667" y="1" width="1" height="24" fill="#e5e5e5"/><rect x="666" y="25" width="1" height="117" fill="#c0c0c0"/><rect x="743" y="1" width="1" height="24" fill="#e5e5e5"/><rect x="742" y="25" width="1" height="117" fill="#c0c0c0"/><rect x="819" y="1" width="1" height="24" fill="#e5e5e5"/><rect x="818" y="25" width="1" height="117" fill="#c0c0c0"/><rect x="895" y="1" width="1" height="24" fill="#e5e5e5"/><rect x="894" y="25" width="1" height="117" fill="#c0c0c0"/><rect x="1010" y="1" width="1" height="24" fill="#e5e5e5"/><rect x="1009" y="25" width="1" height="117" fill="#c0c0c0"/><rect x="1250" y="1" width="18" height="141" fill="#f0f0f0"/><rect x="1251" y="18" width="15" height="59" fill="#cdcdcd"/><path d="M1255.200 12.700l3.400-3.700l3.400 3.700M1255.200 130.500l3.400 3.700l3.400-3.700" stroke="#505050" stroke-width="2" fill="none"/><g clip-path="url(#tc)"><path d="M15.500 30.5q0-1 1-1h6l3.500 3.500v8.500q0 1-1 1h-8.500q-1 0-1-1z" fill="url(#dg)" stroke="#6e6e6e" stroke-width="1"/><path d="M22.500 29.8v3.200h3.200" fill="none" stroke="#6e6e6e" stroke-width=".9"/><circle cx="25.500" cy="40.4" r="3.300" fill="#ee4a30" stroke="#b03018" stroke-width=".7"/><circle cx="24.600" cy="39.4" r="1.100" fill="#fff" opacity=".55"/><path d="M996.400 32.4l7.200 7.200M1003.600 32.4l-7.200 7.200" stroke="#a2a2a2" stroke-width="1.900"/></g><g clip-path="url(#tc)"><path d="M15.500 51.5q0-1 1-1h6l3.500 3.500v8.500q0 1-1 1h-8.500q-1 0-1-1z" fill="url(#dg)" stroke="#6e6e6e" stroke-width="1"/><path d="M22.500 50.8v3.200h3.200" fill="none" stroke="#6e6e6e" stroke-width=".9"/><circle cx="25.500" cy="61.4" r="3.300" fill="#ee4a30" stroke="#b03018" stroke-width=".7"/><circle cx="24.600" cy="60.4" r="1.100" fill="#fff" opacity=".55"/><path d="M996.400 53.4l7.200 7.200M1003.600 53.4l-7.200 7.200" stroke="#a2a2a2" stroke-width="1.900"/></g><g clip-path="url(#tc)"><path d="M15.500 72.5q0-1 1-1h6l3.500 3.500v8.500q0 1-1 1h-8.500q-1 0-1-1z" fill="url(#dg)" stroke="#6e6e6e" stroke-width="1"/><path d="M22.500 71.8v3.200h3.200" fill="none" stroke="#6e6e6e" stroke-width=".9"/><circle cx="25.500" cy="82.4" r="3.300" fill="#2f86ea" stroke="#1a4ea0" stroke-width=".7"/><circle cx="24.600" cy="81.4" r="1.100" fill="#fff" opacity=".55"/><path d="M996.400 74.4l7.200 7.200M1003.600 74.4l-7.200 7.200" stroke="#a2a2a2" stroke-width="1.900"/></g><g clip-path="url(#tc)"><path d="M15.500 93.5q0-1 1-1h6l3.500 3.500v8.500q0 1-1 1h-8.500q-1 0-1-1z" fill="url(#dg)" stroke="#6e6e6e" stroke-width="1"/><path d="M22.500 92.8v3.200h3.200" fill="none" stroke="#6e6e6e" stroke-width=".9"/><circle cx="25.500" cy="103.4" r="3.300" fill="#ee4a30" stroke="#b03018" stroke-width=".7"/><circle cx="24.600" cy="102.4" r="1.100" fill="#fff" opacity=".55"/><path d="M996.400 95.4l7.200 7.200M1003.600 95.4l-7.200 7.200" stroke="#a2a2a2" stroke-width="1.900"/></g><g clip-path="url(#tc)"><path d="M15.500 114.5q0-1 1-1h6l3.500 3.500v8.500q0 1-1 1h-8.500q-1 0-1-1z" fill="url(#dg)" stroke="#6e6e6e" stroke-width="1"/><path d="M22.500 113.8v3.200h3.200" fill="none" stroke="#6e6e6e" stroke-width=".9"/><circle cx="25.500" cy="124.4" r="3.300" fill="#ee4a30" stroke="#b03018" stroke-width=".7"/><circle cx="24.600" cy="123.4" r="1.100" fill="#fff" opacity=".55"/><path d="M996.400 116.4l7.200 7.200M1003.600 116.4l-7.200 7.200" stroke="#a2a2a2" stroke-width="1.900"/></g><g clip-path="url(#tc)"><path d="M15.500 135.5q0-1 1-1h6l3.500 3.500v8.500q0 1-1 1h-8.500q-1 0-1-1z" fill="url(#dg)" stroke="#6e6e6e" stroke-width="1"/><path d="M22.500 134.8v3.200h3.200" fill="none" stroke="#6e6e6e" stroke-width=".9"/><circle cx="25.500" cy="145.4" r="3.300" fill="#ee4a30" stroke="#b03018" stroke-width=".7"/><circle cx="24.600" cy="144.4" r="1.100" fill="#fff" opacity=".55"/><path d="M996.400 137.4l7.200 7.200M1003.600 137.4l-7.200 7.200" stroke="#a2a2a2" stroke-width="1.900"/></g><rect x="12" y="142" width="1256" height="1" fill="#000"/><rect x="0" y="167" width="1270" height="2" fill="#f0f0f0"/><rect x="0" y="169" width="1270" height="1" fill="#a0a0a0"/><rect x="0" y="170" width="1270" height="1" fill="#fff"/></svg><span style="left:17.50px;top:5px;font-size:12px;letter-spacing:0.984px;">订单</span><span style="left:219.00px;top:5px;font-size:12px;letter-spacing:0.784px;">时间</span><span style="left:288.40px;top:5px;font-size:12px;letter-spacing:0.784px;">类型</span><span style="left:340.90px;top:5px;font-size:12px;letter-spacing:0.784px;">手数</span><span style="left:485.50px;top:5px;font-size:12px;letter-spacing:0.784px;">价格</span><span style="left:561.70px;top:5px;font-size:12px;letter-spacing:0.784px;">止损</span><span style="left:637.70px;top:5px;font-size:12px;letter-spacing:0.784px;">止盈</span><span style="left:713.90px;top:5px;font-size:12px;letter-spacing:0.784px;">价格</span><span style="left:777.90px;top:5px;font-size:12px;letter-spacing:0.392px;">手续费</span><span style="left:853.70px;top:5px;font-size:12px;letter-spacing:0.392px;">库存费</span><span style="left:980.30px;top:5px;font-size:12px;letter-spacing:0.784px;">获利</span><span style="left:1219.90px;top:5px;font-size:12px;letter-spacing:0.784px;">注释</span><span style="left:380.30px;top:5px;font-size:12px;letter-spacing:-0.029px;">交易...</span><svg width="8" height="8" style="left:425px;top:8px"><path d="M2 7l4-6" stroke="#808080" stroke-width="1"/></svg><span style="left:34.00px;top:28px;font-size:12.4px;letter-spacing:0.046px;color:#fff;">123470841</span><span style="left:132.00px;top:28px;font-size:12.4px;letter-spacing:0.000px;color:#fff;">2022.05.17 18:26:48</span><span style="left:295.71px;top:28px;font-size:12.4px;letter-spacing:0.000px;color:#fff;">sell</span><span style="left:343.57px;top:28px;font-size:12.4px;letter-spacing:0.000px;color:#fff;">1.00</span><span style="left:392.70px;top:28px;font-size:12.4px;letter-spacing:0.569px;color:#fff;">audusd</span><span style="left:468.43px;top:28px;font-size:12.4px;letter-spacing:0.000px;color:#fff;">0.70110</span><span style="left:543.60px;top:28px;font-size:12.4px;letter-spacing:0.000px;color:#fff;">0.00000</span><span style="left:619.60px;top:28px;font-size:12.4px;letter-spacing:0.000px;color:#fff;">0.00000</span><span style="left:695.40px;top:28px;font-size:12.4px;letter-spacing:0.000px;color:#fff;">0.70131</span><span style="left:792.48px;top:28px;font-size:12.4px;letter-spacing:0.000px;color:#fff;">0.00</span><span style="left:864.15px;top:28px;font-size:12.4px;letter-spacing:0.000px;color:#fff;">-0.93</span><span style="left:951.36px;top:28px;font-size:12.4px;letter-spacing:0.000px;color:#fff;">-21.00</span><span style="left:34.00px;top:49px;font-size:12.4px;letter-spacing:0.046px;color:#000;">123510277</span><span style="left:132.00px;top:49px;font-size:12.4px;letter-spacing:0.000px;color:#000;">2022.05.18 03:36:06</span><span style="left:295.71px;top:49px;font-size:12.4px;letter-spacing:0.000px;color:#000;">sell</span><span style="left:343.57px;top:49px;font-size:12.4px;letter-spacing:0.000px;color:#000;">2.00</span><span style="left:392.70px;top:49px;font-size:12.4px;letter-spacing:0.569px;color:#000;">audusd</span><span style="left:467.50px;top:49px;font-size:12.4px;letter-spacing:0.000px;color:#000;">0.70424</span><span style="left:543.60px;top:49px;font-size:12.4px;letter-spacing:0.000px;color:#000;">0.00000</span><span style="left:619.60px;top:49px;font-size:12.4px;letter-spacing:0.000px;color:#000;">0.00000</span><span style="left:695.40px;top:49px;font-size:12.4px;letter-spacing:0.000px;color:#000;">0.70131</span><span style="left:792.48px;top:49px;font-size:12.4px;letter-spacing:0.000px;color:#000;">0.00</span><span style="left:868.28px;top:49px;font-size:12.4px;letter-spacing:0.000px;color:#000;">0.00</span><span style="left:948.59px;top:49px;font-size:12.4px;letter-spacing:0.000px;color:#000;">586.00</span><span style="left:34.00px;top:70px;font-size:12.4px;letter-spacing:0.046px;color:#000;">123547937</span><span style="left:132.00px;top:70px;font-size:12.4px;letter-spacing:0.000px;color:#000;">2022.05.18 10:33:12</span><span style="left:294.32px;top:70px;font-size:12.4px;letter-spacing:0.000px;color:#000;">buy</span><span style="left:343.57px;top:70px;font-size:12.4px;letter-spacing:0.000px;color:#000;">1.00</span><span style="left:392.70px;top:70px;font-size:12.4px;letter-spacing:0.569px;color:#000;">audusd</span><span style="left:467.50px;top:70px;font-size:12.4px;letter-spacing:0.000px;color:#000;">0.70093</span><span style="left:543.60px;top:70px;font-size:12.4px;letter-spacing:0.000px;color:#000;">0.00000</span><span style="left:619.60px;top:70px;font-size:12.4px;letter-spacing:0.000px;color:#000;">0.00000</span><span style="left:696.33px;top:70px;font-size:12.4px;letter-spacing:0.000px;color:#000;">0.70110</span><span style="left:792.48px;top:70px;font-size:12.4px;letter-spacing:0.000px;color:#000;">0.00</span><span style="left:868.28px;top:70px;font-size:12.4px;letter-spacing:0.000px;color:#000;">0.00</span><span style="left:955.48px;top:70px;font-size:12.4px;letter-spacing:0.000px;color:#000;">17.00</span><span style="left:34.00px;top:91px;font-size:12.4px;letter-spacing:0.046px;color:#000;">123470429</span><span style="left:132.00px;top:91px;font-size:12.4px;letter-spacing:0.000px;color:#000;">2022.05.17 18:21:39</span><span style="left:295.71px;top:91px;font-size:12.4px;letter-spacing:0.000px;color:#000;">sell</span><span style="left:343.57px;top:91px;font-size:12.4px;letter-spacing:0.000px;color:#000;">1.00</span><span style="left:390.70px;top:91px;font-size:12.4px;letter-spacing:0.969px;color:#000;">gbpusd</span><span style="left:467.50px;top:91px;font-size:12.4px;letter-spacing:0.000px;color:#000;">1.24603</span><span style="left:543.60px;top:91px;font-size:12.4px;letter-spacing:0.000px;color:#000;">0.00000</span><span style="left:619.60px;top:91px;font-size:12.4px;letter-spacing:0.000px;color:#000;">0.00000</span><span style="left:695.40px;top:91px;font-size:12.4px;letter-spacing:0.000px;color:#000;">1.24228</span><span style="left:792.48px;top:91px;font-size:12.4px;letter-spacing:0.000px;color:#000;">0.00</span><span style="left:864.15px;top:91px;font-size:12.4px;letter-spacing:0.000px;color:#000;">-3.63</span><span style="left:948.59px;top:91px;font-size:12.4px;letter-spacing:0.000px;color:#000;">375.00</span><span style="left:34.00px;top:112px;font-size:12.4px;letter-spacing:0.046px;color:#000;">123476614</span><span style="left:132.00px;top:112px;font-size:12.4px;letter-spacing:0.000px;color:#000;">2022.05.17 19:09:58</span><span style="left:295.71px;top:112px;font-size:12.4px;letter-spacing:0.000px;color:#000;">sell</span><span style="left:343.57px;top:112px;font-size:12.4px;letter-spacing:0.000px;color:#000;">2.00</span><span style="left:390.70px;top:112px;font-size:12.4px;letter-spacing:0.969px;color:#000;">gbpusd</span><span style="left:467.50px;top:112px;font-size:12.4px;letter-spacing:0.000px;color:#000;">1.24737</span><span style="left:543.60px;top:112px;font-size:12.4px;letter-spacing:0.000px;color:#000;">0.00000</span><span style="left:619.60px;top:112px;font-size:12.4px;letter-spacing:0.000px;color:#000;">0.00000</span><span style="left:695.40px;top:112px;font-size:12.4px;letter-spacing:0.000px;color:#000;">1.24228</span><span style="left:792.48px;top:112px;font-size:12.4px;letter-spacing:0.000px;color:#000;">0.00</span><span style="left:864.15px;top:112px;font-size:12.4px;letter-spacing:0.000px;color:#000;">-7.26</span><span style="left:938.27px;top:112px;font-size:12.4px;letter-spacing:0.000px;color:#000;">1 018.00</span><span style="left:34.00px;top:133px;font-size:12.4px;letter-spacing:0.046px;color:#000;">123510305</span><span style="left:132.92px;top:133px;font-size:12.4px;letter-spacing:0.000px;color:#000;">2022.05.18 03:37:11</span><span style="left:295.71px;top:133px;font-size:12.4px;letter-spacing:0.000px;color:#000;">sell</span><span style="left:343.57px;top:133px;font-size:12.4px;letter-spacing:0.000px;color:#000;">3.00</span><span style="left:390.70px;top:133px;font-size:12.4px;letter-spacing:0.969px;color:#000;">gbpusd</span><span style="left:467.50px;top:133px;font-size:12.4px;letter-spacing:0.000px;color:#000;">1.24907</span><span style="left:543.60px;top:133px;font-size:12.4px;letter-spacing:0.000px;color:#000;">0.00000</span><span style="left:619.60px;top:133px;font-size:12.4px;letter-spacing:0.000px;color:#000;">0.00000</span><span style="left:695.40px;top:133px;font-size:12.4px;letter-spacing:0.000px;color:#000;">1.24228</span><span style="left:792.48px;top:133px;font-size:12.4px;letter-spacing:0.000px;color:#000;">0.00</span><span style="left:868.28px;top:133px;font-size:12.4px;letter-spacing:0.000px;color:#000;">0.00</span><span style="left:938.27px;top:133px;font-size:12.4px;letter-spacing:0.000px;color:#000;">2 037.00</span><div style="left:12px;top:143px;width:1256px;height:23px;background:#f0f0f0"></div><div style="left:12px;top:142px;width:1256px;height:1px;background:#000"></div><div style="left:14px;top:142px;width:45px;height:22px;background:#000"></div><div style="left:15px;top:142px;width:43px;height:21px;background:#fff"></div><div style="left:102px;top:146px;width:1px;height:16px;background:#6a6a6a"></div><div style="left:170px;top:146px;width:1px;height:16px;background:#6a6a6a"></div><div style="left:214px;top:146px;width:1px;height:16px;background:#6a6a6a"></div><div style="left:258px;top:146px;width:1px;height:16px;background:#6a6a6a"></div><div style="left:302px;top:146px;width:1px;height:16px;background:#6a6a6a"></div><div style="left:366px;top:146px;width:1px;height:16px;background:#6a6a6a"></div><div style="left:410px;top:146px;width:1px;height:16px;background:#6a6a6a"></div><div style="left:454px;top:146px;width:1px;height:16px;background:#6a6a6a"></div><div style="left:510px;top:146px;width:1px;height:16px;background:#6a6a6a"></div><div style="left:545px;top:146px;width:1px;height:16px;background:#6a6a6a"></div><div style="left:589px;top:146px;width:1px;height:16px;background:#6a6a6a"></div><span style="left:-2px;top:164px;font-size:11px;line-height:12px;color:#000;transform-origin:0 0;transform:rotate(-90deg);letter-spacing:0">终端</span><span style="left:23.70px;top:146px;font-size:12px;letter-spacing:0.084px;color:#000;">交易</span><span style="left:67.70px;top:145px;font-size:12px;letter-spacing:0.584px;color:#7c7c7c;">展示</span><span style="left:111.70px;top:145px;font-size:12px;letter-spacing:-0.005px;color:#7c7c7c;">账户历史</span><span style="left:179.30px;top:145px;font-size:12px;letter-spacing:0.484px;color:#7c7c7c;">新闻</span><span style="left:223.40px;top:145px;font-size:12px;letter-spacing:0.484px;color:#7c7c7c;">警报</span><span style="left:267.50px;top:145px;font-size:12px;letter-spacing:0.484px;color:#7c7c7c;">邮箱</span><span style="left:311.70px;top:145px;font-size:12px;letter-spacing:0.384px;color:#7c7c7c;">市场</span><span style="left:375.70px;top:145px;font-size:12px;letter-spacing:0.584px;color:#7c7c7c;">信号</span><span style="left:419.70px;top:145px;font-size:12px;letter-spacing:0.584px;color:#7c7c7c;">文章</span><span style="left:463.90px;top:145px;font-size:12px;letter-spacing:0.342px;color:#7c7c7c;">代码库</span><span style="left:520.10px;top:145px;font-size:12px;letter-spacing:-1.016px;color:#7c7c7c;">EA</span><span style="left:555.40px;top:145px;font-size:12px;letter-spacing:-0.116px;color:#7c7c7c;">日志</span><span style="left:337.90px;top:149.3px;font-size:10px;letter-spacing:0.606px;color:#f0201a;font-weight:bold;">120</span></div>
<div id="status" class="abs"><svg width="1270" height="23" style="left:0;top:0"><rect x="456" y="3" width="1" height="18" fill="#a0a0a0"/><rect x="590" y="3" width="1" height="18" fill="#a0a0a0"/><rect x="708" y="3" width="1" height="18" fill="#a0a0a0"/><rect x="790" y="3" width="1" height="18" fill="#a0a0a0"/><rect x="871" y="3" width="1" height="18" fill="#a0a0a0"/><rect x="949" y="3" width="1" height="18" fill="#a0a0a0"/><rect x="1030" y="3" width="1" height="18" fill="#a0a0a0"/><rect x="1107" y="3" width="1" height="18" fill="#a0a0a0"/><rect x="1113" y="5" width="2" height="8.5" fill="#1e1204"/><rect x="1113" y="15.7" width="2" height="2.3" fill="#061a80"/><rect x="1116" y="5" width="2" height="8" fill="#1e1204"/><rect x="1116" y="14.7" width="2" height="3.3" fill="#061a80"/><rect x="1119" y="5" width="2" height="7.3" fill="#1e1204"/><rect x="1119" y="13.7" width="2" height="4.3" fill="#061a80"/><rect x="1122" y="5" width="2" height="6.5" fill="#1e1204"/><rect x="1122" y="13.0" width="2" height="5" fill="#061a80"/><rect x="1125" y="5" width="2" height="5.5" fill="#1e1204"/><rect x="1125" y="12.0" width="2" height="6" fill="#061a80"/><rect x="1128" y="5" width="2" height="4.5" fill="#1e1204"/><rect x="1128" y="10.7" width="2" height="7.3" fill="#061a80"/><rect x="1131" y="5" width="2" height="3.3" fill="#1e1204"/><rect x="1131" y="9.7" width="2" height="8.3" fill="#061a80"/><rect x="1134" y="5" width="2" height="2" fill="#1e1204"/><rect x="1134" y="8.0" width="2" height="10" fill="#061a80"/><path d="M1256.500 23l13.500-13.500M1260.500 23l9.500-9.500M1264.500 23l5.500-5.500" stroke="#a8a8a8" stroke-width="1.100"/><path d="M1257.700 23l12.300-12.300M1261.700 23l8.300-8.300M1265.700 23l4.300-4.300" stroke="#fff" stroke-width="1"/><rect x="0" y="22" width="1270" height="1" fill="#a0a0a0"/></svg><span style="left:-1.50px;top:4.5px;font-size:12px;letter-spacing:-0.149px;color:#000;">寻求帮助,请按F1键</span><span style="left:461.50px;top:3.8px;font-size:12.8px;letter-spacing:0.409px;color:#000;">Default</span><span style="left:1140.00px;top:3.8px;font-size:12.8px;letter-spacing:0.275px;color:#000;">25102/21 kb</span></div>
</body>
</html>
